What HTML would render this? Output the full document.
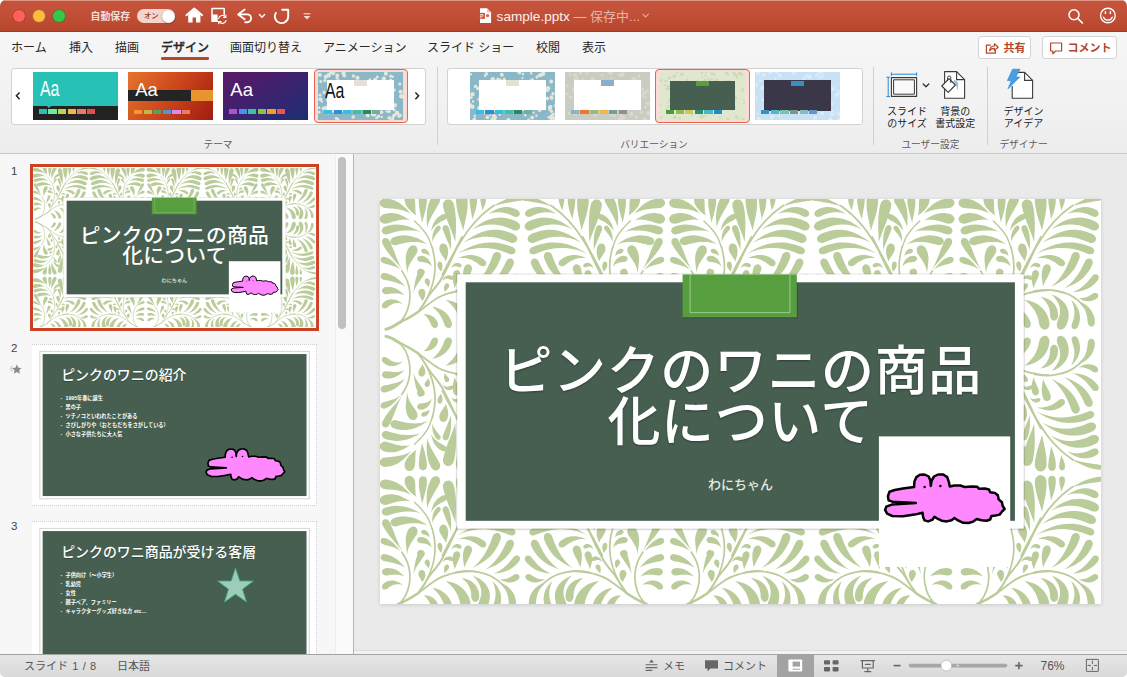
<!DOCTYPE html>
<html lang="ja"><head><meta charset="utf-8"><title>sample.pptx</title>
<style>
*{box-sizing:border-box;margin:0;padding:0}
html,body{width:1127px;height:677px;overflow:hidden;background:#fff}
body{font-family:"Liberation Sans","Noto Sans CJK JP",sans-serif;color:#222;position:relative}
.win{position:absolute;left:0;top:0;width:1127px;height:677px;border-radius:6px 6px 5px 5px;overflow:hidden;background:#ebebeb}
.abs{position:absolute}
.tb{position:absolute;left:0;top:0;width:1127px;height:32px;background:linear-gradient(#c5533a 0,#c4523a 32%,#b8472e 92%,#b5452c 100%);box-shadow:inset 0 1px 0 #dd9683,inset 0 -1px 0 #a5371e}
.tl{position:absolute;top:9.5px;width:12.5px;height:12.5px;border-radius:50%}
.tbt{position:absolute;color:#f9e6e0;white-space:nowrap}
.tabs{position:absolute;left:0;top:32px;width:1127px;height:32px;background:linear-gradient(#f6f6f6,#f4f4f4)}
.tab{position:absolute;top:0;height:32px;line-height:33px;font-size:12px;color:#262626;white-space:nowrap;letter-spacing:0}
.rib{position:absolute;left:0;top:64px;width:1127px;height:90px;background:linear-gradient(#f4f4f4 0,#f1f1f1 55%,#ececec 100%);border-bottom:1px solid #c9c9c9}
.gal{position:absolute;top:3.5px;height:57px;background:#fff;border:1px solid #d2d2d2;border-radius:3px}
.th{position:absolute;top:8px;width:85px;height:48px;overflow:hidden}
.sq{position:absolute;height:5px;width:8.2px}
.sel{position:absolute;top:5px;height:54px;border:1px solid #e8634c;background:#fbdcd5;border-radius:4px}
.glab{position:absolute;top:73px;font-size:9.7px;color:#5c5c5c;white-space:nowrap;transform:translateX(-50%)}
.vsep{position:absolute;top:3px;width:1px;height:78px;background:#d0d0d0}
.blab{position:absolute;font-size:10px;line-height:11.5px;color:#222;text-align:center;white-space:nowrap;transform:translateX(-50%)}
.btn{position:absolute;top:36.5px;height:23px;background:#fff;border:1px solid #d4d4d4;border-radius:3px;color:#b5452b;font-size:12px;font-weight:bold;white-space:nowrap}
.left{position:absolute;left:0;top:154px;width:353px;height:500px;background:#f7f7f7;overflow:hidden}
.divv{position:absolute;left:353px;top:154px;width:1px;height:500px;background:#b4b4b4}
.main{position:absolute;left:354px;top:154px;width:773px;height:500px;background:#eaeaea;overflow:hidden}
.sb{position:absolute;left:0;top:654px;width:1127px;height:23px;background:linear-gradient(#e6e6e6,#d9d9d9);box-shadow:inset 0 1px 0 #a2a2a2;font-size:11px;color:#555}
.sbt{position:absolute;top:1px;line-height:22px;white-space:nowrap;color:#555;font-size:11px}
.num{position:absolute;left:11px;font-size:11.5px;color:#444}
.slide{position:absolute;width:720px;height:405px;transform-origin:0 0;overflow:hidden;background:#fff}
.jp{font-family:"Liberation Sans","Noto Sans CJK JP",sans-serif}
</style></head><body>
<svg width="0" height="0" style="position:absolute"><defs>
<g id="ft" fill="#bacc99">
<path d="M33.4 22L31.4 19.8L29.4 17.5L27.2 15.4L25 13.3L22.5 11.5L19.9 9.9L17.1 8.5L14.2 7.4L11.1 6.7L8 6.3L5.8 6.5L4.2 7.2L3 8.2L2.3 9.4L2 11L2.4 12.6L3.1 13.7L4.2 14.7L5.6 15.5L7.3 15.9L9.9 16.1L12.4 16.3L14.9 16.5L17.5 16.8L20.1 17.2L22.8 17.7L25.5 18.4L28.2 19.3L30.9 20.5ZM32.7 28.2L30.3 26.8L27.9 25.4L25.5 24.1L23 23L20.4 22L17.6 21.4L14.8 21L12 21L9.1 21.3L6.3 22L4.3 23L3 24.3L2.2 25.7L2 27.1L2.4 28.7L3.4 30.1L4.5 30.9L5.9 31.5L7.4 31.7L9.2 31.4L11.3 30.8L13.4 30.1L15.5 29.5L17.7 28.9L20 28.3L22.3 27.9L24.8 27.6L27.4 27.5L30 27.6ZM42.8 40L39.5 38.1L36.2 36.5L32.9 35.1L29.4 33.9L25.9 33.1L22.2 32.6L18.6 32.4L14.8 32.7L11.1 33.4L7.4 34.4L5.8 35.2L4.8 36.3L4.2 37.5L4 38.6L4.3 40L5.1 41.1L6 41.8L7.1 42.2L8.5 42.3L10 42.1L13.1 41.1L16.2 40.2L19.3 39.5L22.4 38.9L25.6 38.5L28.9 38.3L32.2 38.3L35.7 38.5L39.2 39ZM50.1 52.3L47.1 50.3L44.1 48.4L41 46.7L37.7 45.3L34.4 44.3L30.9 43.6L27.4 43.2L23.8 43.3L20.1 43.8L16.5 44.8L14.8 45.6L13.6 46.8L13 48L12.7 49.2L13 50.6L13.9 51.8L14.8 52.5L16.1 53L17.5 53.2L19.1 52.9L22 52L24.9 51.3L27.8 50.7L30.8 50.2L33.8 50L36.9 49.9L40 50L43.3 50.4L46.7 51.2ZM38.7 23.7L38.2 22L37.9 20.2L37.7 18.4L37.7 16.6L37.6 14.9L37.6 13.2L37.6 11.6L37.5 10L37.3 8.5L37.1 7L36.4 5.4L35.4 4.1L34.2 3.1L33 2.6L31.2 2.4L29.5 2.9L28.4 3.7L27.4 5.1L26.9 6.9L27 9.2L27.5 11L28.2 12.8L29.1 14.5L30.2 16L31.5 17.5L32.9 18.9L34.3 20.2L35.8 21.4L37.3 22.5ZM44.4 30.8L45 28.4L45.6 26.1L46.3 23.8L46.9 21.5L47.5 19.2L48.1 16.8L48.5 14.5L48.9 12.2L49.1 9.8L49.2 7.5L49 5.9L48.5 4.7L47.6 3.8L46.7 3.2L45.3 2.9L44 3.2L43 3.7L42.1 4.5L41.5 5.7L41.2 7.2L41.1 9.6L41.2 11.9L41.4 14.3L41.7 16.6L42.1 19L42.6 21.3L43 23.7L43.5 26.1L44 28.4ZM49.5 35.3L50.3 32.4L51.3 29.7L52.5 27.1L53.8 24.5L55.1 22L56.5 19.7L57.8 17.3L59.2 15L60.5 12.7L61.8 10.3L62.4 8.7L62.5 7.1L62.1 5.7L61.6 4.6L60.4 3.5L58.9 2.9L57.6 2.9L56.1 3.3L54.8 4.2L53.5 5.8L52.2 8.5L51 11.4L50.2 14.3L49.6 17.3L49.2 20.3L49 23.3L48.9 26.3L49.1 29.3L49.3 32.3ZM53.4 39.1L54.5 37.3L55.7 35.7L57 34.3L58.3 33L59.7 31.9L61.1 30.9L62.6 30L64 29.2L65.6 28.4L67.1 27.6L68 27L68.7 26.3L69.1 25.5L69.2 24.7L69.1 23.7L68.6 22.8L68 22.3L67.1 22L65.9 22L64.7 22.3L62.7 23.4L61 24.6L59.4 26L58 27.6L56.8 29.3L55.8 31.1L55 33L54.4 35L53.8 37ZM54.5 49.8L55.1 48.3L55.7 46.9L56.4 45.6L57.2 44.3L58 43.1L58.9 42L59.7 40.9L60.6 39.8L61.5 38.7L62.4 37.6L62.8 36.9L63 36.1L63 35.4L62.8 34.8L62.4 34.1L61.7 33.7L61.1 33.5L60.3 33.6L59.5 33.9L58.8 34.6L57.7 35.9L56.9 37.3L56.1 38.8L55.6 40.3L55.1 41.8L54.8 43.4L54.6 45L54.5 46.6L54.5 48.2ZM52 64.1L51.8 63.2L51.6 62.3L51.4 61.4L51.1 60.5L50.7 59.7L50.1 58.9L49.5 58.2L48.8 57.6L48 57.1L47 56.7L45.9 56.6L44.9 56.8L44.2 57.2L43.8 57.7L43.5 58.5L43.7 59.3L44 59.9L44.4 60.4L45 60.9L45.6 61.2L46.2 61.4L46.8 61.5L47.3 61.6L47.9 61.8L48.6 62L49.2 62.2L49.9 62.5L50.7 62.9L51.3 63.5ZM54.2 74.8L53.7 73.2L53.2 71.7L52.6 70.2L51.8 68.8L50.9 67.5L49.8 66.3L48.4 65.3L47 64.5L45.4 63.9L43.6 63.6L42 63.8L40.8 64.3L40 65L39.5 65.8L39.4 66.9L39.8 67.9L40.3 68.6L41.1 69.2L42 69.7L43.1 69.9L44.2 70L45.3 70.1L46.3 70.2L47.4 70.4L48.5 70.7L49.7 71.1L50.9 71.7L52.1 72.5L53.2 73.5ZM40.5 84.9L40.9 84.3L41.4 83.9L41.9 83.5L42.5 83.1L43 82.8L43.4 82.4L43.8 82.1L44.2 81.8L44.5 81.5L44.8 81.2L45.1 80.4L45.2 79.6L45.2 78.8L45 78L44.4 77.2L43.6 76.7L42.9 76.5L41.9 76.6L41 77.1L40.1 78.1L39.7 78.7L39.5 79.4L39.4 80L39.4 80.8L39.4 81.5L39.6 82.2L39.8 82.9L40 83.6L40.3 84.2ZM25.1 78.3L23.4 75.5L21.8 72.6L20.5 69.5L19.2 66.4L17.9 63.3L16.8 60.2L15.6 57.2L14.3 54.1L13 51.1L11.6 48.2L10.7 47L9.7 46.3L8.6 45.9L7.6 45.8L6.3 46.1L5.2 46.9L4.7 47.8L4.3 48.9L4.3 50.2L4.7 51.6L6.4 54.6L8.1 57.5L10.1 60.2L12.1 62.9L14.3 65.5L16.5 68.1L18.8 70.6L21 73.1L23.1 75.7ZM29.9 83.7L29.7 81L29.9 78.4L30.5 75.8L31.4 73.4L32.6 71.1L33.9 69L35.2 66.9L36.6 65L37.9 63L39.1 61.1L39.7 59.4L39.8 57.9L39.6 56.4L39.1 55.2L37.9 54L36.4 53.3L35.1 53.2L33.6 53.6L32 54.6L30.7 56.3L29.4 58.9L28.6 61.7L28.1 64.5L28 67.4L28.2 70.2L28.5 73L28.8 75.7L29.2 78.4L29.6 81ZM68 69.4L68.4 68.1L68.8 66.7L69.3 65.4L69.6 64L69.9 62.6L70.1 61.1L70.1 59.7L70.1 58.3L69.8 57L69.4 55.6L68.6 54.1L67.5 53.1L66.3 52.6L65.2 52.5L63.9 52.9L62.7 53.7L62.1 54.6L61.7 55.7L61.6 57L61.8 58.4L62.3 59.4L62.8 60.5L63.3 61.5L64 62.5L64.7 63.6L65.4 64.6L66.1 65.8L66.9 66.9L67.5 68.1ZM63.2 79.5L63.3 78.8L63.5 78.1L63.7 77.4L63.9 76.8L64.1 76.1L64.2 75.4L64.3 74.8L64.4 74.1L64.3 73.5L64.3 72.9L64 72L63.5 71.4L63 71L62.4 70.8L61.6 70.8L60.9 71.1L60.4 71.5L60 72.1L59.8 72.8L59.8 73.7L60 74.3L60.2 74.9L60.5 75.5L60.8 76.1L61.2 76.6L61.6 77.2L62 77.8L62.4 78.3L62.8 78.9ZM114.2 14.7L117 13.7L119.9 12.8L122.8 12.1L125.7 11.4L128.6 10.8L131.5 10.3L134.4 9.8L137.2 9.4L140.1 9L143 8.6L144 8.3L144.7 7.9L145.2 7.3L145.5 6.6L145.6 5.7L145.3 4.9L144.9 4.3L144.3 3.8L143.4 3.5L142.4 3.5L139.3 4L136.3 4.6L133.3 5.4L130.4 6.4L127.6 7.5L124.8 8.8L122.1 10.1L119.4 11.6L116.8 13.1ZM110.6 22L113.5 21L116.4 20.4L119.2 20.1L121.8 20.1L124.4 20.3L126.8 20.8L129.1 21.4L131.4 22.2L133.7 23.2L136 24.3L137.3 24.7L138.6 24.8L139.8 24.7L140.7 24.2L141.6 23.4L142.1 22.1L142.1 21.1L141.7 19.9L140.8 18.7L139.4 17.7L136.4 16.4L133.3 15.5L130.2 15L127.2 15L124.2 15.4L121.3 16.1L118.5 17.2L115.8 18.6L113.1 20.2ZM94.3 37.7L98.8 35.5L103.2 33.9L107.5 32.9L111.7 32.4L115.7 32.4L119.6 32.8L123.4 33.5L127.1 34.6L130.9 35.9L134.8 37.7L136.6 38.3L138.2 38.3L139.7 38.1L140.9 37.5L142 36.4L142.5 34.8L142.4 33.5L141.8 32.1L140.7 30.6L138.8 29.4L134.1 27.4L129.3 26.1L124.5 25.5L119.7 25.6L115.1 26.3L110.6 27.6L106.3 29.4L102.2 31.8L98.2 34.6ZM85.9 50.6L90.9 48.2L95.8 46.4L100.7 45.3L105.4 44.7L109.9 44.6L114.4 44.9L118.8 45.7L123.1 46.8L127.5 48.3L132 50.2L133.8 50.8L135.4 50.8L136.9 50.5L138 49.9L139.1 48.7L139.5 47.2L139.4 45.9L138.8 44.4L137.6 43.1L135.8 41.9L130.5 39.8L125.2 38.4L119.8 37.7L114.5 37.7L109.4 38.4L104.3 39.8L99.5 41.8L94.8 44.3L90.3 47.2ZM79.7 61.8L85.2 59.5L90.7 57.7L96 56.6L101.3 55.9L106.5 55.8L111.6 56.2L116.7 57L121.7 58.2L126.8 59.8L131.9 61.8L133.4 62.2L134.7 62.2L135.8 61.9L136.7 61.4L137.5 60.4L137.8 59.1L137.7 58.1L137.2 57L136.3 55.9L134.9 55L129.1 52.9L123.3 51.4L117.6 50.5L111.8 50.4L106.2 50.9L100.7 52L95.3 53.7L90 55.9L84.8 58.7ZM80.7 66L83.5 65.8L86.1 65.8L88.6 66.2L90.9 66.7L93 67.5L95 68.4L96.9 69.4L98.7 70.5L100.5 71.8L102.3 73.2L103.4 73.8L104.6 74.2L105.7 74.2L106.6 74L107.6 73.4L108.3 72.4L108.5 71.4L108.4 70.2L107.8 69L106.7 67.8L104.3 66.1L101.8 64.7L99.2 63.8L96.6 63.1L93.9 62.9L91.2 63L88.5 63.4L85.9 64L83.3 64.9ZM73.5 76.1L74.4 75.3L75.2 74.8L76.1 74.4L76.9 74.2L77.6 74.2L78.2 74.2L78.7 74.3L79.3 74.5L79.8 74.7L80.4 74.9L81.1 75.1L81.8 75.2L82.5 75.1L83.1 75L83.6 74.5L83.9 73.9L83.8 73.2L83.5 72.5L82.9 71.8L81.9 71.2L80.8 70.8L79.7 70.7L78.6 70.8L77.5 71.2L76.6 71.7L75.8 72.4L75.1 73.2L74.5 74.1L74 75.1ZM104.6 18.4L105.2 17.2L105.7 16.1L106.3 14.9L106.8 13.7L107.3 12.4L107.7 11.2L108.1 9.9L108.3 8.7L108.4 7.4L108.5 6.1L108.2 4.9L107.8 4L107.1 3.4L106.4 3.1L105.4 2.9L104.4 3.2L103.8 3.6L103.2 4.3L102.8 5.1L102.6 6.2L102.7 7.4L102.8 8.6L102.9 9.7L103.2 10.9L103.4 12.2L103.7 13.4L104 14.6L104.2 15.9L104.5 17.1ZM94.5 27.4L95.2 25.4L96 23.3L96.7 21.3L97.4 19.2L98 17.1L98.5 15L98.9 12.9L99.2 10.7L99.3 8.6L99.3 6.5L99 4.9L98.4 3.8L97.5 3L96.6 2.5L95.3 2.4L94 2.7L93.2 3.3L92.4 4.1L91.9 5.3L91.7 6.7L91.8 8.7L92 10.8L92.2 12.8L92.5 14.8L92.9 16.9L93.2 19L93.6 21L94 23.1L94.3 25.3ZM85.5 38.6L86.1 35.5L86.8 32.5L87.5 29.4L88.1 26.3L88.8 23.2L89.3 20.2L89.7 17.1L89.9 14.1L90 11L90 8L89.5 5.7L88.5 4L87.2 2.8L85.9 2.1L83.9 1.8L81.9 2.3L80.6 3.1L79.4 4.5L78.6 6.2L78.3 8.5L78.5 11.5L78.9 14.6L79.5 17.6L80.1 20.6L80.9 23.6L81.8 26.6L82.8 29.6L83.8 32.6L84.7 35.6ZM77.7 49.8L77.8 46.1L78 42.3L78.2 38.4L78.3 34.6L78.3 30.8L78.2 27L77.9 23.2L77.5 19.4L76.9 15.7L76.1 12L75.2 10L74 8.6L72.6 7.7L71.2 7.3L69.3 7.4L67.5 8.2L66.5 9.3L65.6 10.7L65.2 12.5L65.4 14.6L66.3 18.1L67.3 21.7L68.5 25.2L69.7 28.7L71 32.2L72.4 35.7L73.8 39.2L75.2 42.7L76.5 46.3ZM73.2 58.1L73.3 55.9L73.4 53.6L73.5 51.3L73.4 49L73.3 46.7L73.1 44.4L72.8 42.1L72.3 39.8L71.7 37.6L71 35.4L70.4 34.3L69.6 33.6L68.7 33.1L67.9 33L66.8 33.2L65.9 33.8L65.4 34.5L65 35.4L64.9 36.4L65.1 37.6L65.9 39.6L66.7 41.6L67.5 43.6L68.4 45.6L69.2 47.6L70.1 49.7L71 51.7L71.8 53.8L72.6 56ZM68.1 69.4L68.6 68L69.1 66.5L69.6 65L70 63.5L70.3 62L70.4 60.4L70.5 58.9L70.3 57.4L70 55.8L69.6 54.4L68.6 52.9L67.5 51.9L66.3 51.4L65.2 51.3L63.9 51.7L62.8 52.6L62.2 53.5L61.8 54.7L61.7 55.9L62 57.3L62.5 58.5L63.1 59.6L63.7 60.7L64.3 61.8L65 62.9L65.7 64.1L66.4 65.3L67.1 66.6L67.7 68ZM63.7 79.5L63.8 78.7L64.1 77.9L64.3 77.1L64.5 76.3L64.7 75.4L64.8 74.6L64.8 73.8L64.7 72.9L64.6 72.1L64.4 71.4L63.9 70.5L63.3 69.9L62.6 69.6L62 69.5L61.2 69.7L60.5 70.2L60.1 70.7L59.9 71.3L59.8 72.1L59.9 72.9L60.2 73.5L60.5 74.2L60.8 74.8L61.2 75.4L61.6 76L62.1 76.7L62.5 77.4L62.9 78L63.3 78.7ZM24.2 79.2L22.8 77.6L21.3 76L19.9 74.3L18.4 72.7L16.9 71L15.3 69.5L13.5 68L11.6 66.7L9.6 65.7L7.5 64.8L6.1 64.6L5 64.8L4 65.2L3.4 65.9L2.9 66.9L2.9 68L3.1 68.8L3.6 69.7L4.4 70.4L5.5 71L7.3 71.6L9.3 72.1L11.2 72.6L13.2 73.2L15.1 73.8L17.1 74.5L19.1 75.4L20.9 76.5L22.7 77.7ZM27.4 94.4L25.8 92.5L24.2 90.7L22.5 89L20.7 87.3L18.8 85.8L16.7 84.4L14.6 83.3L12.3 82.3L9.9 81.5L7.5 80.9L6 80.8L4.8 81.2L3.9 81.8L3.3 82.6L2.9 83.7L3 84.9L3.4 85.8L4.1 86.6L5 87.3L6.2 87.7L8.3 88.1L10.4 88.5L12.5 89L14.6 89.5L16.7 90L18.8 90.6L21 91.3L23.2 92.2L25.3 93.2ZM26.7 103.1L25.2 101.6L23.7 100.2L22 98.9L20.3 97.7L18.5 96.7L16.5 95.8L14.4 95.2L12.3 94.9L10.1 94.8L7.9 95L6.3 95.5L5.2 96.3L4.5 97.2L4.2 98.2L4.3 99.4L4.9 100.5L5.6 101.2L6.5 101.8L7.6 102.1L8.9 102.1L10.6 101.9L12.2 101.7L13.9 101.5L15.6 101.4L17.3 101.3L19.1 101.4L20.9 101.5L22.8 101.9L24.8 102.4ZM25.1 111.8L23.4 110.5L21.6 109.3L19.7 108.4L17.8 107.7L15.8 107.3L13.8 107.2L11.7 107.4L9.7 108L7.7 109L5.9 110.3L4.8 111.5L4.2 112.8L4.1 113.9L4.3 114.8L4.9 115.7L5.9 116.2L6.8 116.3L7.8 116.1L8.9 115.8L9.9 115.1L11.1 114.2L12.3 113.3L13.5 112.6L14.7 112L16.1 111.5L17.6 111.1L19.2 110.9L21.1 110.9L23.1 111.2ZM35.2 102L35.9 99.7L36.8 97.6L37.8 95.4L39 93.4L40.3 91.4L41.6 89.5L42.9 87.6L44.1 85.8L45.4 83.9L46.6 82L47 80.9L47.1 79.9L46.9 79L46.5 78.3L45.8 77.5L44.8 77.1L44 77.1L43.1 77.3L42.2 77.9L41.4 78.8L40.2 81L39.2 83.2L38.4 85.5L37.8 87.9L37.3 90.2L36.8 92.6L36.5 95L36.1 97.3L35.7 99.7ZM44.7 109.2L45.1 108.3L45.6 107.5L46.1 106.6L46.6 105.6L47 104.7L47.3 103.7L47.5 102.8L47.6 101.8L47.6 100.8L47.5 99.9L47 98.5L46.2 97.5L45.2 96.9L44.3 96.7L43.1 96.8L42 97.4L41.4 98.1L40.9 99L40.6 100L40.7 101.3L40.9 102L41.2 102.8L41.5 103.5L41.9 104.2L42.4 105L42.9 105.8L43.4 106.6L43.9 107.4L44.3 108.3ZM50.8 95.2L51.1 94.5L51.3 93.8L51.6 93.1L51.9 92.4L52.1 91.7L52.2 91L52.3 90.3L52.2 89.6L52.1 88.9L52 88.3L51.4 87.3L50.7 86.7L49.9 86.3L49.2 86.3L48.4 86.5L47.7 87.1L47.3 87.6L47 88.4L46.9 89.1L47.1 90L47.3 90.5L47.6 91L47.9 91.5L48.3 92L48.7 92.5L49.2 93L49.6 93.5L50.1 94L50.5 94.6ZM46.1 122.2L47.4 123.4L48.5 124.5L49.5 125.6L50.3 126.7L51 127.8L51.6 128.9L52.2 129.9L52.7 130.9L53.1 132L53.6 133.1L54.2 134.1L54.9 134.9L55.8 135.5L56.7 135.8L57.9 135.9L59 135.4L59.7 134.7L60.2 133.6L60.4 132.2L60 130.5L59.3 128.9L58.3 127.4L57.2 126.1L55.9 125L54.4 124L52.9 123.3L51.3 122.7L49.6 122.3L47.9 122.2ZM86.7 94.2L87.3 92.4L88.1 90.7L88.9 89L89.7 87.4L90.6 85.8L91.4 84.3L92.2 82.7L92.9 81.2L93.5 79.6L94.1 78L94.4 76.5L94.2 75.2L93.8 74.1L93.1 73.3L91.9 72.5L90.6 72.2L89.5 72.4L88.3 72.9L87.3 73.9L86.5 75.3L86 77.2L85.6 79L85.3 80.9L85.2 82.8L85.3 84.7L85.4 86.6L85.7 88.5L86 90.4L86.3 92.3ZM94.5 94.6L98.3 92.8L101.9 90.9L105.4 88.7L108.8 86.3L111.9 83.6L114.7 80.6L117.3 77.3L119.5 73.8L121.4 70L123 66L123.3 64.1L123.1 62.6L122.5 61.3L121.7 60.5L120.3 59.8L118.8 59.8L117.7 60.1L116.6 60.8L115.6 61.8L114.9 63.3L113.7 66.8L112.3 70.2L110.8 73.5L109.2 76.8L107.4 80L105.4 83.1L103.1 86.1L100.6 89.1L97.7 92ZM107.4 96.3L111 95L114.5 93.5L117.9 91.9L121.1 89.9L124.2 87.8L127.1 85.3L129.7 82.5L132 79.5L134.1 76.1L135.8 72.6L136.3 70.9L136.2 69.4L135.7 68.1L135 67.3L133.8 66.5L132.4 66.4L131.3 66.6L130.2 67.2L129.2 68.1L128.4 69.4L127 72.5L125.5 75.5L123.9 78.4L122.2 81.2L120.3 84L118.2 86.7L115.9 89.3L113.4 91.8L110.6 94.1ZM115.8 100.2L118.7 99.9L121.6 99.6L124.5 99L127.2 98.2L129.9 97.2L132.5 95.9L135 94.3L137.3 92.5L139.4 90.4L141.4 88.1L142.1 86.7L142.3 85.4L142.2 84.3L141.7 83.4L140.9 82.6L139.7 82.2L138.8 82.2L137.7 82.4L136.7 83L135.8 83.9L134.2 85.9L132.6 87.8L131 89.7L129.3 91.5L127.4 93.2L125.5 94.9L123.3 96.4L121 97.9L118.5 99.1ZM122 105.8L123.7 106.7L125.4 107.6L127.1 108.3L128.9 108.8L130.7 109.1L132.6 109.1L134.5 108.9L136.3 108.5L138.1 107.7L139.8 106.7L141 105.7L141.6 104.6L141.8 103.5L141.7 102.6L141.1 101.7L140.2 101.1L139.3 100.8L138.4 100.8L137.4 101L136.3 101.5L135.1 102.3L134 103L132.8 103.7L131.6 104.3L130.3 104.9L128.9 105.4L127.3 105.7L125.7 106L123.9 106ZM54.6 114.6L56.5 116.3L58.3 118L59.9 119.8L61.3 121.5L62.5 123.3L63.5 125.1L64.5 126.9L65.3 128.7L66.1 130.6L66.8 132.6L67.4 133.9L68.2 134.8L69.2 135.5L70.2 135.9L71.5 135.9L72.7 135.4L73.5 134.6L74.1 133.5L74.3 132L74 130.2L73 127.7L71.8 125.3L70.2 123.2L68.5 121.2L66.5 119.5L64.4 118L62.1 116.8L59.7 115.8L57.2 115ZM68.1 107.8L71 110.2L73.4 112.5L75.5 114.8L77.2 117.1L78.7 119.5L79.8 121.8L80.8 124.2L81.6 126.7L82.2 129.2L82.7 131.9L83.3 133.8L84.2 135.3L85.4 136.4L86.6 137.2L88.3 137.6L90.1 137.2L91.3 136.3L92.3 134.8L92.9 132.8L92.9 130.2L92.1 126.6L90.8 123.1L89 119.9L86.9 117.1L84.4 114.6L81.6 112.5L78.6 110.8L75.3 109.4L71.8 108.4ZM84.1 104.8L86.3 106.7L88.2 108.5L89.7 110.3L90.9 112.2L91.8 114L92.5 115.7L92.9 117.5L93.3 119.3L93.5 121.2L93.5 123.3L93.8 124.8L94.3 126.2L95 127.3L95.8 128L97.1 128.6L98.5 128.5L99.5 127.9L100.6 126.9L101.3 125.3L101.6 123.3L101.4 120.3L100.8 117.5L99.7 114.9L98.3 112.5L96.6 110.5L94.5 108.7L92.2 107.3L89.7 106.2L87 105.3ZM95.1 102.2L97.9 105.3L100.1 108.3L101.8 111.2L102.8 113.9L103.4 116.5L103.6 118.9L103.5 121.2L103 123.6L102.2 126.2L101.1 128.9L100.5 130.9L100.3 132.7L100.5 134.4L100.9 135.7L102 137L103.7 137.6L105.1 137.4L106.8 136.6L108.5 135.2L109.9 132.9L111.4 129L112.1 125.1L112.2 121.2L111.5 117.5L110.1 114.1L108.1 111L105.5 108.3L102.5 105.9L99 103.9ZM114.7 107.8L115.9 110.6L116.8 113.2L117.4 115.8L117.8 118.2L117.9 120.5L117.8 122.8L117.5 125L117 127.2L116.3 129.4L115.4 131.7L115.1 132.9L115.1 134.1L115.3 135.2L115.8 136L116.6 136.8L117.8 137.1L118.7 137L119.8 136.5L120.8 135.6L121.6 134.3L122.7 131.3L123.3 128.4L123.5 125.5L123.3 122.6L122.7 119.8L121.8 117.1L120.5 114.6L118.9 112.2L117 109.9ZM121.4 108.7L123.5 110.8L125.3 112.9L126.8 115L128 117.1L129 119.2L129.7 121.3L130.3 123.4L130.7 125.6L131 127.9L131.2 130.2L131.5 131.6L132 132.7L132.7 133.6L133.5 134.2L134.7 134.6L135.9 134.4L136.8 133.9L137.6 132.9L138.2 131.6L138.4 129.9L138.1 126.9L137.4 124L136.3 121.3L135 118.8L133.3 116.5L131.3 114.5L129.2 112.7L126.8 111.2L124.2 109.9ZM77.1 96.3L77.5 94.8L78 93.4L78.6 91.9L79.2 90.6L79.8 89.2L80.4 87.9L81 86.6L81.5 85.3L81.9 84.1L82.4 82.8L82.5 81.5L82.3 80.4L81.9 79.4L81.3 78.7L80.3 78.1L79.1 77.9L78.1 78.1L77.2 78.6L76.3 79.5L75.7 80.8L75.3 82.3L75.1 83.9L75 85.5L75.1 87.1L75.2 88.6L75.5 90.2L75.9 91.8L76.3 93.3L76.7 94.8ZM64.6 89L65.5 88.1L66.4 87.4L67.4 87L68.3 86.7L69.1 86.6L69.8 86.6L70.4 86.7L71.1 86.9L71.7 87.1L72.5 87.4L73.2 87.7L74 87.7L74.6 87.7L75.2 87.5L75.8 87.1L76 86.4L76 85.8L75.7 85.1L75 84.3L74.1 83.7L72.8 83.3L71.6 83.1L70.3 83.2L69.1 83.6L68.1 84.1L67.2 84.8L66.4 85.7L65.7 86.7L65.1 87.8ZM67 100.2L67.4 99.6L67.8 99L68.3 98.4L68.8 97.9L69.3 97.4L69.7 96.9L70.2 96.4L70.6 95.9L70.9 95.4L71.2 94.9L71.5 94.2L71.6 93.4L71.4 92.7L71.2 92.2L70.6 91.6L69.9 91.2L69.2 91.2L68.5 91.4L67.8 91.8L67.1 92.6L66.8 93.3L66.5 94.1L66.4 94.8L66.3 95.6L66.3 96.4L66.4 97.2L66.5 98L66.7 98.7L66.9 99.5Z"/>
<path d="M8.2 137.1C9.2 136.8 11.8 136.1 14.1 135C16.4 133.9 20.7 131.1 22 130.3" fill="none" stroke="#bacc99" stroke-width="3" stroke-linecap="round"/>
<path d="M20.9 131C22.6 130.1 28 127.4 31.2 125.6C34.4 123.8 38.5 121.1 40 120.2" fill="none" stroke="#bacc99" stroke-width="2.5" stroke-linecap="round"/>
<path d="M40 120.2C41 118.8 44.3 114.6 46.1 111.8C48 109 48.5 107.2 51.2 103.4C53.9 99.5 59 94 62.4 88.8C65.8 83.5 68.6 77.5 71.4 71.9C74.2 66.3 77.1 59.6 79.2 55.1C81.4 50.6 83.4 46.7 84.3 45" fill="none" stroke="#bacc99" stroke-width="2" stroke-linecap="round"/>
<path d="M64.8 82.3C65.9 80.1 68.9 74 71.5 69.1C74.1 64.3 77.1 58.9 80.5 53.4C83.9 48 87.8 41.6 91.7 36.6C95.6 31.5 99.9 27 104.1 23.1C108.2 19.2 114.3 14.9 116.4 13.3" fill="none" stroke="#bacc99" stroke-width="1.8" stroke-linecap="round"/>
<path d="M49.5 106.2C50 104.9 51.5 101.8 52.5 98.9C53.6 96 54.9 92.3 55.7 88.8C56.5 85.2 57.2 81.3 57.3 77.5C57.5 73.8 57.3 70.1 56.8 66.3C56.3 62.6 54.9 57 54.5 55.1" fill="none" stroke="#bacc99" stroke-width="1.7" stroke-linecap="round"/>
<path d="M54.5 55.7C53.8 53.8 51.9 47.8 50.1 44.5C48.2 41.1 45.5 38.1 43.3 35.5C41.1 32.9 37.9 30.1 36.8 29" fill="none" stroke="#bacc99" stroke-width="1.4" stroke-linecap="round"/>
<path d="M22 130.3C23 129 26.2 125.6 27.8 122.4C29.4 119.3 30.8 115 31.5 111.2C32.2 107.5 32.4 103.7 32.1 100C31.8 96.2 30.9 92.3 29.6 88.8C28.3 85.3 25.1 80.5 24.2 78.9" fill="none" stroke="#bacc99" stroke-width="1.7" stroke-linecap="round"/>
<path d="M40 120.4C41.5 119.3 45.6 115.9 48.9 113.5C52.3 111 56.4 107.7 60.2 105.6C63.9 103.5 67.6 102.2 71.4 101.1C75.1 100 79.2 99.4 82.6 98.9C86 98.4 90.3 98.2 91.8 98.1" fill="none" stroke="#bacc99" stroke-width="1.8" stroke-linecap="round"/>
<path d="M78.2 98.9C80.1 98.7 85.7 97.7 89.5 97.7C93.2 97.7 96.9 98.1 100.7 98.9C104.4 99.6 108.5 100.7 111.9 102.2C115.3 103.7 118.3 105.8 120.9 107.8C123.5 109.9 126.5 113.5 127.6 114.6" fill="none" stroke="#bacc99" stroke-width="1.8" stroke-linecap="round"/>
</g>
<g id="croc">
<path d="M8.4 30.7L10 26.4L15.2 24.6L23.4 23.2L34.6 21.7L34.9 16.4L36.9 11.7L40.4 9.4L45.1 9.1L49.2 11.1L50.9 15.2L51.3 20.5L52.1 15.2L54.5 11.1L58.6 9.1L63.8 9.1L67.7 11.7L69.3 16.4L70.3 21.1L75 20.1L80.8 20.1L85.5 21.7L92.5 21.1L97.8 21.4L99.6 23.4L105.4 23.2L109.5 24L110.7 26.9L115.4 27.5L118.3 29.9L119.2 34L122.4 36.9L123.2 40.4L125.1 43.6L122.4 46.3L120.1 49.2L116 50.1L111.9 50.6L110.7 54.1L107.2 55.3L101.9 54.8L97.2 53.6L93.7 56.2L89 57.6L83.7 57.4L78.5 55L75 52.5L72 54.8L67.3 56L62.1 55.3L58 53.3L55 51.3L52.7 54.5L48.6 56L45.1 55L43.6 51.5L43.1 47.4L35.1 49.2L23.4 50.9L12.9 50.6L7.6 48.3L5.6 44.5L6.8 41.2L12.3 39.2L36.3 37.7L12.9 36.3L9.1 34.9Z" fill="#ff88ff" stroke="#000" stroke-width="2.5" stroke-linejoin="round"/>
<circle cx="45.1" cy="21.7" r="1.25"/><circle cx="60.9" cy="20.5" r="1.25"/>
</g>
</defs></svg>
<div class="win">
<div class="tb">
<div class="tl" style="left:12.8px;background:#fc615d;box-shadow:0 0 0 .6px #b3331f"></div>
<div class="tl" style="left:32.7px;background:#fdbc40;box-shadow:0 0 0 .6px #b7702a"></div>
<div class="tl" style="left:52.7px;background:#34c84a;box-shadow:0 0 0 .6px #3a7a2c"></div>
<div class="tbt" style="left:90.5px;top:8.5px;font-size:9.9px;line-height:15px;font-weight:700;color:#f6ddd6">自動保存</div>
<div class="abs" style="left:136.6px;top:9px;width:38.4px;height:14.4px;border-radius:7.2px;background:#f5d4cb"></div>
<div class="tbt" style="left:144px;top:9px;font-size:7.3px;line-height:14.4px;font-weight:500;color:#8e3a27">オン</div>
<div class="abs" style="left:161.5px;top:9.5px;width:13px;height:13px;border-radius:50%;background:#fdfdfd;box-shadow:0 .5px 1.5px rgba(0,0,0,.5)"></div>
<svg class="abs" style="left:0;top:0" width="1127" height="32" viewBox="0 0 1127 32" fill="none" stroke="#fff" stroke-linecap="round" stroke-linejoin="round">
<path d="M186.4 15.2L194.3 8.4L202.2 15.2" stroke-width="1.9"/>
<path d="M188.2 14.6L194.3 9.6L200.4 14.6V22.6H196V17.6H192.6V22.6H188.2Z" fill="#fff" stroke="none"/>
<path d="M217.5 21.3H212V8.4H224.2V14.5" stroke-width="1.5"/>
<path d="M212 14.5H217.6V21.3H212Z" fill="#fff" stroke="none"/>
<path d="M218.6 18.3A3.9 3.9 0 0 1 225.6 17.2M226 20.6A3.9 3.9 0 0 1 219 21.7" stroke-width="1.2"/>
<path d="M225.9 15.1V17.4H223.6M218.7 23.8V21.5H221" stroke-width="1.1"/>
<path d="M244.6 9.5L238.2 14.4L244.6 19.3M238.6 14.4H247.2A3.9 3.9 0 0 1 247.2 22.2H245.2" stroke-width="1.9"/>
<path d="M259.4 14.5L262 17.2L264.6 14.5" stroke-width="1.3"/>
<path d="M275.8 12.9A6.7 6.7 0 1 0 288.2 16.4V9.7H282.2" stroke-width="1.9"/>
<path d="M303.6 13.8H310.4" stroke-width="1.1" stroke-linecap="butt" stroke="#f6ddd6"/>
<path d="M303.5 15.9H310.5L307 19.6Z" fill="#f6ddd6" stroke="none"/>
<path d="M480 8.2H487L491.1 12.4V23.1H480Z" fill="#fff" stroke="none"/>
<path d="M487 8.2V12.4H491.1Z" fill="#e3c9c2" stroke="none"/>
<rect x="478.4" y="12.9" width="6.5" height="5.9" fill="#d5492d" stroke="none"/>
<text x="480" y="17.9" font-family="Liberation Sans,sans-serif" font-size="5.4" font-weight="700" fill="#fbe5df" stroke="none">P</text>
<circle cx="487.6" cy="15.6" r="1.7" fill="#e0674f" stroke="none"/>
<path d="M642.8 14.2L645.6 17L648.4 14.2" stroke-width="1.1" stroke="#e3a597"/>
<circle cx="1074" cy="14.7" r="5" stroke-width="1.5"/><path d="M1077.7 18.4L1082.4 23" stroke-width="1.7"/>
<circle cx="1107.9" cy="15.5" r="7.3" stroke-width="1.4"/>
<path d="M1103.6 17.2A4.6 4.6 0 0 0 1112.2 17.2" stroke-width="1.3"/>
<path d="M1105.4 11.8V13.6M1110.4 11.8V13.6" stroke-width="1.5"/>
</svg>
<div class="tbt" style="left:496.6px;top:8.2px;font-size:13.6px;line-height:18px;color:#fcf0ec">sample.pptx<span style="color:#e9b2a5;font-size:13px"> — 保存中...</span></div>
</div>
<div class="tabs">
<div class="tab" style="left:11px;">ホーム</div>
<div class="tab" style="left:69px;">挿入</div>
<div class="tab" style="left:115px;">描画</div>
<div class="tab" style="left:161px;font-weight:500;-webkit-text-stroke:.3px #262626;">デザイン</div>
<div class="tab" style="left:230px;">画面切り替え</div>
<div class="tab" style="left:323px;">アニメーション</div>
<div class="tab" style="left:427px;">スライド ショー</div>
<div class="tab" style="left:536px;">校閲</div>
<div class="tab" style="left:582px;">表示</div>
<div class="abs" style="left:161px;top:25.2px;width:47.5px;height:2.6px;border-radius:1.3px;background:#b7472a"></div>
<div class="btn" style="left:977.5px;top:4px;width:53px"></div>
<div class="btn" style="left:1041.5px;top:4px;width:75px"></div>
<svg class="abs" style="left:0;top:0" width="1127" height="32" viewBox="0 0 1127 32" fill="none" stroke="#b5452b" stroke-width="1.2" stroke-linejoin="round" stroke-linecap="round">
<path d="M990.4 13.2H986.4V21.2H995.4V18.6"/><path d="M989.6 18.6C990 15.4 992 14 994.4 14V11.8L998.2 15.2L994.4 18.4V16.4C992.4 16.4 990.8 17 989.6 18.6Z"/>
<path d="M1050.6 11H1061.6V19H1055.6L1052.8 21.8V19H1050.6Z"/>
</svg>
<div class="abs" style="left:1003.4px;top:4.5px;line-height:22px;font-size:11px;font-weight:700;color:#b5452b;white-space:nowrap">共有</div>
<div class="abs" style="left:1067.5px;top:4.5px;line-height:22px;font-size:11px;font-weight:700;color:#b5452b;white-space:nowrap">コメント</div>
</div>
<div class="rib">
<div class="gal" style="left:10.5px;width:415px"></div>
<svg class="abs" style="left:14px;top:26px" width="8" height="12" viewBox="0 0 8 12"><path d="M5.6 2.4L2.4 5.8L5.6 9.2" fill="none" stroke="#222" stroke-width="1.5"/></svg>
<svg class="abs" style="left:413px;top:26px" width="8" height="12" viewBox="0 0 8 12"><path d="M2.4 2.4L5.6 5.8L2.4 9.2" fill="none" stroke="#222" stroke-width="1.5"/></svg>
<div class="th" style="left:33.3px;width:84.6px;background:#27c1b5"><div class="abs" style="left:0;top:34px;width:85px;height:14px;background:#222"></div><div class="abs" style="left:14px;top:34px;width:0;height:0;border-left:2.6px solid transparent;border-right:2.6px solid transparent;border-top:2.6px solid #27c1b5"></div><div class="sq" style="left:5.6px;top:37.4px;width:8.2px;height:4.8px;background:#27c1b5"></div><div class="sq" style="left:15.2px;top:37.4px;width:8.2px;height:4.8px;background:#6fe8a0"></div><div class="sq" style="left:24.9px;top:37.4px;width:8.2px;height:4.8px;background:#b5d94a"></div><div class="sq" style="left:34.5px;top:37.4px;width:8.2px;height:4.8px;background:#f0b840"></div><div class="sq" style="left:44.1px;top:37.4px;width:8.2px;height:4.8px;background:#f07860"></div><div class="sq" style="left:53.8px;top:37.4px;width:8.2px;height:4.8px;background:#e84c50"></div><div class="abs" style="left:6.5px;top:4px;font-size:22px;line-height:26px;color:#fff;transform:scaleX(.72);transform-origin:0 0;white-space:nowrap">Aa</div></div>
<div class="th" style="left:128.2px;width:84.6px;background:linear-gradient(125deg,#e3762f 0,#cf4a1c 45%,#a01c10 100%)"><div class="abs" style="left:0;top:18.2px;width:63px;height:11.3px;background:#242424"></div><div class="abs" style="left:63px;top:18.2px;width:22px;height:11.3px;background:#ea9430"></div><div class="sq" style="left:5.8px;top:37.6px;width:8.2px;height:4.8px;background:#ef9a2c"></div><div class="sq" style="left:15.4px;top:37.6px;width:8.2px;height:4.8px;background:#bdb84c"></div><div class="sq" style="left:25.1px;top:37.6px;width:8.2px;height:4.8px;background:#4da368"></div><div class="sq" style="left:34.7px;top:37.6px;width:8.2px;height:4.8px;background:#4e99d0"></div><div class="sq" style="left:44.3px;top:37.6px;width:8.2px;height:4.8px;background:#d98cf0"></div><div class="sq" style="left:54.0px;top:37.6px;width:8.2px;height:4.8px;background:#f07c5c"></div><div class="abs" style="left:7px;top:7px;font-size:18.5px;line-height:22px;color:#fff;white-space:nowrap">Aa</div></div>
<div class="th" style="left:223.3px;width:84.3px;background:linear-gradient(150deg,#5b1a66 0,#43206e 40%,#1b2f72 100%)"><div class="sq" style="left:5.7px;top:37.4px;width:8.2px;height:4.8px;background:#b050d0"></div><div class="sq" style="left:15.3px;top:37.4px;width:8.2px;height:4.8px;background:#4e90e0"></div><div class="sq" style="left:25.0px;top:37.4px;width:8.2px;height:4.8px;background:#40c0a0"></div><div class="sq" style="left:34.6px;top:37.4px;width:8.2px;height:4.8px;background:#90c040"></div><div class="sq" style="left:44.2px;top:37.4px;width:8.2px;height:4.8px;background:#f0a020"></div><div class="sq" style="left:53.9px;top:37.4px;width:8.2px;height:4.8px;background:#f05050"></div><div class="abs" style="left:7px;top:7px;font-size:18.5px;line-height:22px;color:#fff;white-space:nowrap">Aa</div></div>
<div class="sel" style="left:313.5px;width:94px"></div>
<div class="th" style="left:318px;width:85px;background:#8bb8c8"><svg class="abs" style="left:0;top:0" width="85" height="48" fill="#e6e6da"><circle cx="20.2" cy="26.1" r="1.6"/><circle cx="51.3" cy="30.0" r="1.2"/><circle cx="1.1" cy="40.2" r="1.4"/><circle cx="19.9" cy="47.8" r="1.7"/><circle cx="71.1" cy="22.9" r="1.9"/><circle cx="12.8" cy="30.5" r="2.1"/><circle cx="44.5" cy="35.6" r="1.9"/><circle cx="5.4" cy="36.4" r="1.8"/><circle cx="25.6" cy="1.5" r="2.1"/><circle cx="40.2" cy="34.5" r="2.1"/><circle cx="60.7" cy="44.2" r="1.6"/><circle cx="68.1" cy="21.3" r="2.2"/><circle cx="74.7" cy="4.7" r="1.3"/><circle cx="18.4" cy="46.3" r="1.6"/><circle cx="53.3" cy="14.4" r="1.7"/><circle cx="32.8" cy="16.8" r="1.8"/><circle cx="49.7" cy="43.4" r="1.9"/><circle cx="79.0" cy="41.1" r="2.3"/><circle cx="57.1" cy="7.8" r="2.1"/><circle cx="82.0" cy="43.4" r="1.8"/><circle cx="60.7" cy="10.1" r="2.1"/><circle cx="48.8" cy="13.7" r="1.2"/><circle cx="72.6" cy="47.5" r="1.2"/><circle cx="68.1" cy="19.7" r="1.3"/><circle cx="25.0" cy="36.9" r="2.1"/><circle cx="3.8" cy="29.5" r="1.2"/><circle cx="61.1" cy="15.9" r="2.1"/><circle cx="83.4" cy="24.3" r="2.3"/><circle cx="26.3" cy="3.7" r="1.8"/><circle cx="2.7" cy="9.5" r="1.6"/><circle cx="51.9" cy="7.5" r="1.2"/><circle cx="73.8" cy="15.1" r="2.2"/><circle cx="76.2" cy="18.1" r="1.7"/><circle cx="44.2" cy="30.9" r="1.8"/><circle cx="47.5" cy="29.8" r="2.2"/><circle cx="43.1" cy="20.7" r="2.0"/><circle cx="20.2" cy="14.5" r="2.3"/><circle cx="44.3" cy="26.3" r="1.2"/><circle cx="35.3" cy="27.8" r="1.2"/><circle cx="52.3" cy="30.3" r="1.2"/><circle cx="53.3" cy="22.4" r="1.9"/><circle cx="30.0" cy="33.9" r="2.0"/><circle cx="1.9" cy="2.9" r="1.9"/><circle cx="81.9" cy="12.1" r="1.7"/><circle cx="50.4" cy="15.4" r="1.6"/><circle cx="26.6" cy="17.7" r="1.8"/><circle cx="25.5" cy="18.1" r="2.0"/><circle cx="2.3" cy="27.3" r="2.0"/><circle cx="26.4" cy="10.7" r="2.1"/><circle cx="20.3" cy="9.0" r="1.6"/><circle cx="59.3" cy="4.9" r="1.5"/><circle cx="28.4" cy="40.0" r="1.6"/><circle cx="72.7" cy="8.1" r="1.5"/><circle cx="55.3" cy="42.5" r="1.7"/><circle cx="19.1" cy="5.8" r="1.7"/><circle cx="16.2" cy="38.7" r="2.1"/><circle cx="15.6" cy="13.4" r="2.1"/><circle cx="54.6" cy="38.7" r="1.5"/><circle cx="11.0" cy="14.0" r="2.0"/><circle cx="23.0" cy="16.6" r="1.6"/><circle cx="35.7" cy="19.7" r="2.2"/><circle cx="13.3" cy="0.2" r="2.2"/><circle cx="74.8" cy="47.4" r="1.6"/><circle cx="80.8" cy="44.5" r="1.4"/><circle cx="63.4" cy="40.2" r="1.9"/><circle cx="44.1" cy="13.9" r="1.5"/><circle cx="19.3" cy="3.3" r="1.8"/><circle cx="24.4" cy="38.9" r="1.2"/><circle cx="76.8" cy="33.3" r="2.2"/><circle cx="76.2" cy="43.2" r="1.8"/><circle cx="1.1" cy="35.8" r="1.3"/><circle cx="25.5" cy="31.8" r="1.7"/><circle cx="35.2" cy="45.1" r="1.8"/><circle cx="29.0" cy="12.1" r="2.1"/><circle cx="40.6" cy="37.6" r="1.5"/><circle cx="16.8" cy="25.7" r="2.1"/><circle cx="14.6" cy="38.0" r="2.2"/><circle cx="68.5" cy="39.5" r="1.1"/><circle cx="53.4" cy="41.4" r="1.2"/><circle cx="23.1" cy="12.9" r="1.7"/><circle cx="36.0" cy="22.7" r="2.0"/><circle cx="0.2" cy="2.6" r="1.3"/><circle cx="10.6" cy="3.3" r="2.3"/><circle cx="72.6" cy="4.1" r="1.7"/><circle cx="26.9" cy="15.1" r="1.5"/><circle cx="55.0" cy="28.2" r="1.6"/><circle cx="16.2" cy="15.8" r="1.3"/><circle cx="47.2" cy="34.4" r="1.6"/><circle cx="6.8" cy="8.6" r="1.6"/><circle cx="51.4" cy="37.6" r="1.6"/><circle cx="68.1" cy="29.9" r="1.6"/><circle cx="31.7" cy="23.8" r="1.9"/><circle cx="35.7" cy="33.3" r="1.7"/><circle cx="20.8" cy="25.7" r="1.9"/><circle cx="6.1" cy="20.4" r="1.6"/><circle cx="74.8" cy="45.0" r="1.6"/><circle cx="76.3" cy="38.0" r="1.4"/><circle cx="39.5" cy="5.9" r="2.1"/><circle cx="56.3" cy="42.6" r="2.0"/><circle cx="56.7" cy="35.2" r="1.8"/><circle cx="8.8" cy="28.2" r="1.1"/><circle cx="12.2" cy="37.2" r="1.2"/><circle cx="7.8" cy="4.8" r="2.1"/><circle cx="15.2" cy="1.1" r="2.1"/><circle cx="10.3" cy="40.5" r="1.9"/><circle cx="71.1" cy="45.7" r="1.8"/><circle cx="67.9" cy="1.7" r="2.0"/><circle cx="43.5" cy="34.3" r="1.3"/><circle cx="63.7" cy="44.9" r="1.2"/><circle cx="27.6" cy="27.1" r="2.1"/><circle cx="20.6" cy="8.6" r="1.4"/><circle cx="52.4" cy="36.2" r="1.6"/><circle cx="31.2" cy="19.0" r="1.5"/><circle cx="35.5" cy="4.0" r="1.7"/><circle cx="82.7" cy="19.8" r="2.0"/><circle cx="13.7" cy="33.2" r="2.0"/><circle cx="57.3" cy="24.8" r="1.7"/><circle cx="54.7" cy="43.1" r="1.3"/><circle cx="8.1" cy="35.9" r="2.2"/><circle cx="44.0" cy="21.3" r="2.0"/><circle cx="15.8" cy="12.8" r="1.4"/><circle cx="49.8" cy="15.1" r="1.4"/><circle cx="58.7" cy="45.8" r="1.5"/><circle cx="60.0" cy="19.8" r="2.1"/><circle cx="49.7" cy="12.8" r="1.4"/><circle cx="2.0" cy="23.0" r="1.6"/><circle cx="14.6" cy="17.3" r="1.5"/><circle cx="65.8" cy="6.9" r="2.3"/><circle cx="40.8" cy="28.8" r="1.7"/><circle cx="70.9" cy="39.4" r="1.8"/></svg><div class="abs" style="left:9px;top:8.4px;width:66.7px;height:29.6px;background:#fff"></div><div class="abs" style="left:36px;top:8px;width:13px;height:5.5px;background:#e5e0d5"></div><div class="sq" style="left:6.0px;top:38.0px;width:8.2px;height:4.2px;background:#30c0e8"></div><div class="sq" style="left:15.6px;top:38.0px;width:8.2px;height:4.2px;background:#2890d8"></div><div class="sq" style="left:25.3px;top:38.0px;width:8.2px;height:4.2px;background:#30c0e0"></div><div class="sq" style="left:34.9px;top:38.0px;width:8.2px;height:4.2px;background:#40c0a0"></div><div class="sq" style="left:44.5px;top:38.0px;width:8.2px;height:4.2px;background:#308858"></div><div class="sq" style="left:54.2px;top:38.0px;width:8.2px;height:4.2px;background:#70b0a0"></div><div class="abs" style="left:7px;top:5.5px;font-size:22px;line-height:26px;color:#111;transform:scaleX(.72);transform-origin:0 0;white-space:nowrap">Aa</div></div>
<div class="vsep" style="left:436.5px"></div>
<div class="glab" style="left:218px">テーマ</div>
<div class="gal" style="left:447px;width:415.5px"></div>
<div class="th" style="left:470px;width:85px;background:#8bb8c8"><svg class="abs" style="left:0;top:0" width="85" height="48" fill="#e6e6da"><circle cx="52.9" cy="35.6" r="2.0"/><circle cx="80.1" cy="35.5" r="2.2"/><circle cx="2.5" cy="22.3" r="2.2"/><circle cx="55.2" cy="43.2" r="1.3"/><circle cx="39.9" cy="11.8" r="1.8"/><circle cx="48.8" cy="0.6" r="1.4"/><circle cx="23.8" cy="44.0" r="2.0"/><circle cx="13.6" cy="38.3" r="1.3"/><circle cx="52.5" cy="6.1" r="1.1"/><circle cx="74.1" cy="10.1" r="1.4"/><circle cx="83.5" cy="41.9" r="1.5"/><circle cx="81.7" cy="25.9" r="1.9"/><circle cx="17.4" cy="45.2" r="1.9"/><circle cx="82.2" cy="42.9" r="1.5"/><circle cx="30.7" cy="8.0" r="1.3"/><circle cx="5.5" cy="14.5" r="1.8"/><circle cx="0.3" cy="32.5" r="1.5"/><circle cx="26.3" cy="39.3" r="1.7"/><circle cx="26.8" cy="23.1" r="1.9"/><circle cx="4.8" cy="46.8" r="1.2"/><circle cx="63.7" cy="40.6" r="1.2"/><circle cx="67.0" cy="17.6" r="1.8"/><circle cx="0.8" cy="2.2" r="1.3"/><circle cx="81.2" cy="9.4" r="2.0"/><circle cx="79.0" cy="45.2" r="1.5"/><circle cx="30.2" cy="25.2" r="2.0"/><circle cx="9.2" cy="35.9" r="2.0"/><circle cx="73.1" cy="1.8" r="2.2"/><circle cx="7.8" cy="16.4" r="1.8"/><circle cx="78.0" cy="16.3" r="2.2"/><circle cx="46.3" cy="15.0" r="1.5"/><circle cx="15.1" cy="3.8" r="1.3"/><circle cx="58.6" cy="47.8" r="1.3"/><circle cx="4.1" cy="47.4" r="1.7"/><circle cx="34.5" cy="11.4" r="1.8"/><circle cx="70.2" cy="21.9" r="1.6"/><circle cx="4.7" cy="44.0" r="1.2"/><circle cx="42.0" cy="40.2" r="1.3"/><circle cx="62.2" cy="45.6" r="1.9"/><circle cx="67.0" cy="5.1" r="1.6"/><circle cx="12.7" cy="40.5" r="1.5"/><circle cx="38.5" cy="48.0" r="2.1"/><circle cx="83.0" cy="21.8" r="1.7"/><circle cx="62.0" cy="23.0" r="1.5"/><circle cx="34.3" cy="7.0" r="1.6"/><circle cx="84.0" cy="46.1" r="1.9"/><circle cx="42.4" cy="16.2" r="1.2"/><circle cx="23.1" cy="37.5" r="2.1"/><circle cx="30.7" cy="37.7" r="2.0"/><circle cx="59.0" cy="31.9" r="2.0"/><circle cx="30.9" cy="33.8" r="1.5"/><circle cx="41.3" cy="36.9" r="1.9"/><circle cx="25.0" cy="45.4" r="1.9"/><circle cx="49.4" cy="0.6" r="1.8"/><circle cx="21.3" cy="32.2" r="1.7"/><circle cx="69.4" cy="31.1" r="2.0"/><circle cx="29.6" cy="30.9" r="2.0"/><circle cx="70.4" cy="16.8" r="2.1"/><circle cx="73.9" cy="33.0" r="2.3"/><circle cx="81.3" cy="24.9" r="1.7"/><circle cx="14.1" cy="40.2" r="2.2"/><circle cx="40.6" cy="33.2" r="2.0"/><circle cx="62.1" cy="8.2" r="2.0"/><circle cx="49.4" cy="31.9" r="1.6"/><circle cx="53.0" cy="37.2" r="1.9"/><circle cx="61.2" cy="1.3" r="1.3"/><circle cx="37.5" cy="31.2" r="1.4"/><circle cx="58.3" cy="30.3" r="1.2"/><circle cx="40.1" cy="10.9" r="1.2"/><circle cx="11.3" cy="15.2" r="1.3"/><circle cx="16.4" cy="1.7" r="1.7"/><circle cx="32.3" cy="29.4" r="1.8"/><circle cx="20.2" cy="43.4" r="1.1"/><circle cx="34.5" cy="13.4" r="1.6"/><circle cx="9.8" cy="39.9" r="1.6"/><circle cx="3.1" cy="29.5" r="1.2"/><circle cx="46.3" cy="16.3" r="1.8"/><circle cx="81.5" cy="39.3" r="1.6"/><circle cx="69.1" cy="30.8" r="1.6"/><circle cx="12.1" cy="28.6" r="1.8"/><circle cx="81.4" cy="46.5" r="1.8"/><circle cx="29.8" cy="42.9" r="1.1"/><circle cx="9.2" cy="27.2" r="1.8"/><circle cx="12.0" cy="30.2" r="2.2"/><circle cx="31.9" cy="20.7" r="1.4"/><circle cx="24.8" cy="46.7" r="1.6"/><circle cx="81.7" cy="43.9" r="1.8"/><circle cx="22.1" cy="47.1" r="1.7"/><circle cx="35.3" cy="15.3" r="2.3"/><circle cx="41.8" cy="13.7" r="1.7"/><circle cx="10.4" cy="29.8" r="1.6"/><circle cx="24.9" cy="37.5" r="2.1"/><circle cx="1.1" cy="25.6" r="1.5"/><circle cx="79.5" cy="37.5" r="1.4"/><circle cx="22.8" cy="7.4" r="2.3"/><circle cx="24.9" cy="29.2" r="1.7"/><circle cx="54.8" cy="29.0" r="2.0"/><circle cx="10.0" cy="36.5" r="1.5"/><circle cx="45.3" cy="16.1" r="1.5"/><circle cx="45.0" cy="22.3" r="1.6"/><circle cx="63.3" cy="28.4" r="1.2"/><circle cx="21.5" cy="21.9" r="2.2"/><circle cx="75.5" cy="26.2" r="1.2"/><circle cx="66.2" cy="20.5" r="1.8"/><circle cx="60.2" cy="30.3" r="1.7"/><circle cx="77.5" cy="18.5" r="1.6"/><circle cx="72.4" cy="9.4" r="1.5"/><circle cx="70.6" cy="3.2" r="2.1"/><circle cx="59.0" cy="20.8" r="1.5"/><circle cx="66.4" cy="43.7" r="1.3"/><circle cx="40.7" cy="26.4" r="1.7"/><circle cx="28.1" cy="7.4" r="1.8"/><circle cx="69.0" cy="3.3" r="1.4"/><circle cx="69.7" cy="38.0" r="1.9"/><circle cx="2.2" cy="34.7" r="2.3"/><circle cx="84.9" cy="33.7" r="1.2"/><circle cx="71.6" cy="10.5" r="1.9"/><circle cx="80.9" cy="34.2" r="1.3"/><circle cx="24.9" cy="44.1" r="1.3"/><circle cx="51.9" cy="19.9" r="1.3"/><circle cx="52.9" cy="2.1" r="1.3"/><circle cx="32.2" cy="3.5" r="1.2"/><circle cx="48.9" cy="35.6" r="2.1"/><circle cx="11.4" cy="20.7" r="1.5"/><circle cx="51.0" cy="23.5" r="2.2"/><circle cx="31.8" cy="2.7" r="1.9"/><circle cx="12.8" cy="30.3" r="1.7"/><circle cx="77.4" cy="26.6" r="1.8"/><circle cx="22.4" cy="26.5" r="1.4"/><circle cx="63.8" cy="24.8" r="1.3"/></svg><div class="abs" style="left:8.9px;top:8.4px;width:67.1px;height:29.6px;background:#fff"></div><div class="abs" style="left:36px;top:8px;width:13px;height:5.5px;background:#e5e0d5"></div><div class="sq" style="left:5.8px;top:38.0px;width:8.2px;height:4.2px;background:#30c0e8"></div><div class="sq" style="left:15.4px;top:38.0px;width:8.2px;height:4.2px;background:#2890d8"></div><div class="sq" style="left:25.1px;top:38.0px;width:8.2px;height:4.2px;background:#30c0e0"></div><div class="sq" style="left:34.7px;top:38.0px;width:8.2px;height:4.2px;background:#40c0a0"></div><div class="sq" style="left:44.3px;top:38.0px;width:8.2px;height:4.2px;background:#308858"></div><div class="sq" style="left:54.0px;top:38.0px;width:8.2px;height:4.2px;background:#70b0a0"></div></div>
<div class="th" style="left:565px;width:85px;background:#c9cdc1"><svg class="abs" style="left:0;top:0" width="85" height="48" fill="#d6d9cc"><circle cx="27.5" cy="7.2" r="2.0"/><circle cx="6.2" cy="25.7" r="1.6"/><circle cx="4.9" cy="24.4" r="1.2"/><circle cx="36.9" cy="3.4" r="1.3"/><circle cx="36.1" cy="39.7" r="1.3"/><circle cx="19.0" cy="30.1" r="2.3"/><circle cx="49.1" cy="19.0" r="2.4"/><circle cx="4.0" cy="41.2" r="1.5"/><circle cx="12.3" cy="5.7" r="1.6"/><circle cx="69.4" cy="8.7" r="1.9"/><circle cx="54.3" cy="17.9" r="1.9"/><circle cx="5.3" cy="2.9" r="1.4"/><circle cx="57.8" cy="20.5" r="1.6"/><circle cx="49.8" cy="21.8" r="1.6"/><circle cx="67.5" cy="33.6" r="1.5"/><circle cx="48.8" cy="25.2" r="2.3"/><circle cx="62.0" cy="13.8" r="2.4"/><circle cx="10.0" cy="20.1" r="2.1"/><circle cx="12.9" cy="23.5" r="1.2"/><circle cx="56.8" cy="36.7" r="1.9"/><circle cx="74.4" cy="15.1" r="2.0"/><circle cx="50.5" cy="27.8" r="1.7"/><circle cx="71.4" cy="45.3" r="1.8"/><circle cx="56.5" cy="2.9" r="2.0"/><circle cx="55.0" cy="47.7" r="2.2"/><circle cx="24.2" cy="18.5" r="2.0"/><circle cx="1.9" cy="22.2" r="1.4"/><circle cx="10.0" cy="2.8" r="2.1"/><circle cx="11.0" cy="11.9" r="1.7"/><circle cx="74.1" cy="3.9" r="1.7"/><circle cx="46.7" cy="42.4" r="2.2"/><circle cx="73.4" cy="13.4" r="1.7"/><circle cx="30.5" cy="42.4" r="2.3"/><circle cx="12.8" cy="8.5" r="1.5"/><circle cx="19.8" cy="23.3" r="1.9"/><circle cx="22.3" cy="0.2" r="1.7"/><circle cx="31.4" cy="27.2" r="2.3"/><circle cx="58.7" cy="24.7" r="1.9"/><circle cx="57.5" cy="2.6" r="2.3"/><circle cx="66.3" cy="42.0" r="2.2"/><circle cx="33.4" cy="19.2" r="1.3"/><circle cx="53.9" cy="3.0" r="1.3"/><circle cx="17.7" cy="7.8" r="1.6"/><circle cx="4.5" cy="0.0" r="1.4"/><circle cx="8.6" cy="17.5" r="1.2"/><circle cx="74.3" cy="29.5" r="1.4"/><circle cx="21.4" cy="16.7" r="1.6"/><circle cx="10.4" cy="40.7" r="2.4"/><circle cx="39.6" cy="23.2" r="1.3"/><circle cx="8.7" cy="16.4" r="1.5"/><circle cx="70.5" cy="7.7" r="1.2"/><circle cx="80.8" cy="25.4" r="1.4"/><circle cx="46.2" cy="1.3" r="1.8"/><circle cx="83.2" cy="41.4" r="2.0"/><circle cx="22.2" cy="17.6" r="1.4"/><circle cx="65.6" cy="25.6" r="2.1"/><circle cx="28.0" cy="10.7" r="2.2"/><circle cx="83.7" cy="40.9" r="2.2"/><circle cx="69.6" cy="35.5" r="1.5"/><circle cx="44.0" cy="17.1" r="1.2"/><circle cx="2.4" cy="13.4" r="1.5"/><circle cx="58.9" cy="45.9" r="1.7"/><circle cx="79.6" cy="47.4" r="2.3"/><circle cx="31.0" cy="10.6" r="1.5"/><circle cx="16.7" cy="9.8" r="1.9"/><circle cx="76.5" cy="40.3" r="1.8"/><circle cx="55.5" cy="38.4" r="1.3"/><circle cx="56.1" cy="43.7" r="2.1"/><circle cx="63.8" cy="22.9" r="1.4"/><circle cx="67.1" cy="16.0" r="2.2"/><circle cx="82.6" cy="19.0" r="1.7"/><circle cx="80.5" cy="34.8" r="1.4"/><circle cx="10.8" cy="7.3" r="2.3"/><circle cx="68.6" cy="7.0" r="2.2"/><circle cx="83.3" cy="31.5" r="1.6"/><circle cx="46.6" cy="6.3" r="1.2"/><circle cx="82.5" cy="31.2" r="1.8"/><circle cx="79.4" cy="20.8" r="2.2"/><circle cx="70.2" cy="10.1" r="1.5"/><circle cx="24.9" cy="11.5" r="1.9"/><circle cx="22.0" cy="20.1" r="1.4"/><circle cx="77.4" cy="17.0" r="1.7"/><circle cx="49.6" cy="43.4" r="1.7"/><circle cx="78.0" cy="24.1" r="1.8"/><circle cx="44.5" cy="0.9" r="1.7"/><circle cx="15.6" cy="0.2" r="2.2"/><circle cx="14.6" cy="22.7" r="2.1"/><circle cx="47.3" cy="15.6" r="1.8"/><circle cx="47.2" cy="37.6" r="1.3"/><circle cx="47.6" cy="11.9" r="1.5"/></svg><div class="abs" style="left:8.9px;top:8.4px;width:67.1px;height:29.6px;background:#fff"></div><div class="abs" style="left:36px;top:8px;width:13px;height:5.5px;background:#88b0c8"></div><div class="sq" style="left:5.8px;top:38.0px;width:8.2px;height:4.2px;background:#88b4cc"></div><div class="sq" style="left:15.4px;top:38.0px;width:8.2px;height:4.2px;background:#e87830"></div><div class="sq" style="left:25.1px;top:38.0px;width:8.2px;height:4.2px;background:#a0b880"></div><div class="sq" style="left:34.7px;top:38.0px;width:8.2px;height:4.2px;background:#f0b848"></div><div class="sq" style="left:44.3px;top:38.0px;width:8.2px;height:4.2px;background:#70a098"></div><div class="sq" style="left:54.0px;top:38.0px;width:8.2px;height:4.2px;background:#909090"></div></div>
<div class="sel" style="left:655.3px;width:94.5px"></div>
<div class="th" style="left:660.4px;width:84.6px;background:#dfe8cf"><svg class="abs" style="left:0;top:0" width="85" height="48" fill="#cddab6"><circle cx="39.4" cy="17.9" r="1.0"/><circle cx="73.7" cy="0.3" r="1.4"/><circle cx="76.4" cy="3.9" r="1.4"/><circle cx="52.4" cy="2.0" r="1.2"/><circle cx="59.8" cy="21.7" r="1.6"/><circle cx="13.4" cy="11.4" r="1.0"/><circle cx="43.0" cy="44.3" r="1.4"/><circle cx="65.8" cy="18.4" r="1.6"/><circle cx="8.6" cy="14.0" r="1.5"/><circle cx="61.7" cy="20.2" r="1.0"/><circle cx="22.7" cy="10.1" r="1.2"/><circle cx="68.8" cy="9.6" r="1.7"/><circle cx="74.7" cy="2.6" r="1.2"/><circle cx="41.8" cy="1.1" r="1.3"/><circle cx="77.0" cy="5.4" r="1.4"/><circle cx="10.3" cy="27.8" r="1.7"/><circle cx="17.3" cy="0.4" r="1.0"/><circle cx="45.9" cy="0.8" r="1.0"/><circle cx="42.2" cy="44.2" r="1.3"/><circle cx="33.8" cy="30.7" r="1.0"/><circle cx="49.3" cy="8.3" r="1.4"/><circle cx="81.5" cy="2.6" r="1.4"/><circle cx="51.5" cy="7.2" r="1.1"/><circle cx="84.6" cy="47.9" r="1.0"/><circle cx="60.0" cy="45.6" r="1.1"/><circle cx="51.9" cy="2.1" r="1.2"/><circle cx="57.3" cy="28.3" r="1.6"/><circle cx="7.4" cy="16.7" r="1.7"/><circle cx="49.7" cy="21.7" r="1.3"/><circle cx="83.8" cy="27.6" r="0.9"/><circle cx="67.9" cy="15.8" r="1.3"/><circle cx="18.1" cy="21.3" r="1.2"/><circle cx="7.5" cy="30.2" r="1.0"/><circle cx="66.6" cy="1.2" r="1.6"/><circle cx="68.6" cy="23.9" r="1.5"/><circle cx="21.1" cy="35.4" r="1.3"/><circle cx="19.6" cy="46.3" r="1.3"/><circle cx="31.7" cy="41.3" r="1.2"/><circle cx="56.7" cy="8.2" r="1.7"/><circle cx="22.0" cy="2.4" r="1.8"/><circle cx="14.7" cy="45.4" r="1.8"/><circle cx="51.6" cy="0.6" r="1.0"/><circle cx="17.7" cy="18.7" r="1.5"/><circle cx="82.1" cy="17.0" r="1.0"/><circle cx="47.8" cy="6.6" r="1.0"/><circle cx="47.3" cy="33.4" r="1.0"/><circle cx="38.4" cy="33.8" r="1.6"/><circle cx="32.6" cy="42.6" r="1.1"/><circle cx="60.8" cy="37.0" r="1.7"/><circle cx="42.0" cy="4.8" r="0.9"/><circle cx="45.0" cy="8.3" r="1.5"/><circle cx="7.2" cy="37.4" r="1.1"/><circle cx="1.1" cy="8.4" r="1.3"/><circle cx="47.5" cy="18.6" r="1.1"/><circle cx="41.0" cy="45.4" r="1.4"/><circle cx="80.0" cy="1.4" r="1.8"/><circle cx="75.6" cy="26.1" r="1.4"/><circle cx="45.7" cy="43.7" r="1.0"/><circle cx="54.6" cy="26.0" r="1.2"/><circle cx="61.6" cy="34.6" r="1.0"/><circle cx="59.5" cy="21.8" r="1.3"/><circle cx="54.1" cy="2.5" r="1.4"/><circle cx="31.7" cy="42.2" r="1.1"/><circle cx="70.0" cy="35.0" r="1.5"/><circle cx="74.4" cy="1.7" r="1.4"/><circle cx="52.1" cy="32.5" r="1.3"/><circle cx="5.9" cy="9.1" r="1.4"/><circle cx="15.4" cy="3.1" r="1.2"/><circle cx="40.0" cy="25.7" r="0.9"/><circle cx="65.9" cy="16.0" r="1.6"/><circle cx="0.7" cy="45.8" r="1.4"/><circle cx="83.0" cy="47.3" r="1.6"/><circle cx="9.0" cy="16.7" r="1.1"/><circle cx="66.3" cy="9.2" r="1.1"/><circle cx="9.4" cy="5.8" r="1.7"/><circle cx="83.0" cy="17.9" r="1.6"/><circle cx="39.7" cy="25.1" r="1.2"/><circle cx="54.0" cy="11.3" r="1.1"/><circle cx="44.0" cy="9.5" r="1.3"/><circle cx="80.2" cy="1.1" r="1.0"/><circle cx="68.0" cy="2.8" r="1.1"/><circle cx="72.4" cy="29.1" r="1.1"/><circle cx="5.0" cy="13.2" r="1.2"/><circle cx="68.0" cy="46.8" r="1.6"/><circle cx="76.6" cy="44.7" r="1.7"/><circle cx="78.2" cy="46.4" r="1.0"/><circle cx="27.0" cy="11.9" r="1.4"/><circle cx="41.8" cy="16.7" r="1.7"/><circle cx="33.9" cy="10.0" r="1.1"/><circle cx="39.2" cy="29.3" r="1.4"/><circle cx="37.4" cy="8.9" r="1.3"/><circle cx="27.6" cy="8.2" r="1.4"/><circle cx="16.0" cy="34.2" r="1.5"/><circle cx="11.7" cy="30.0" r="1.2"/><circle cx="38.0" cy="29.1" r="1.6"/><circle cx="75.1" cy="35.2" r="1.1"/><circle cx="46.1" cy="16.1" r="0.9"/><circle cx="47.0" cy="22.6" r="1.7"/><circle cx="27.5" cy="40.0" r="1.4"/><circle cx="8.4" cy="34.4" r="1.2"/><circle cx="45.3" cy="3.4" r="0.9"/><circle cx="78.3" cy="2.0" r="1.0"/><circle cx="13.9" cy="4.6" r="1.6"/><circle cx="84.6" cy="31.2" r="1.3"/><circle cx="75.5" cy="24.3" r="1.0"/><circle cx="58.7" cy="17.2" r="1.1"/><circle cx="27.2" cy="18.5" r="1.1"/><circle cx="52.1" cy="41.7" r="1.4"/><circle cx="0.8" cy="32.8" r="0.9"/><circle cx="40.7" cy="41.6" r="1.5"/></svg><div class="abs" style="left:9.6px;top:9.4px;width:65px;height:28.2px;background:#465f50"></div><div class="abs" style="left:35.3px;top:8.5px;width:13.3px;height:5.5px;background:#5a9e3e"></div><div class="sq" style="left:5.6px;top:38.0px;width:8.2px;height:4.2px;background:#4e9a3c"></div><div class="sq" style="left:15.2px;top:38.0px;width:8.2px;height:4.2px;background:#90bc48"></div><div class="sq" style="left:24.9px;top:38.0px;width:8.2px;height:4.2px;background:#d0c850"></div><div class="sq" style="left:34.5px;top:38.0px;width:8.2px;height:4.2px;background:#289078"></div><div class="sq" style="left:44.1px;top:38.0px;width:8.2px;height:4.2px;background:#48b8c8"></div><div class="sq" style="left:53.8px;top:38.0px;width:8.2px;height:4.2px;background:#2888c8"></div></div>
<div class="th" style="left:755.3px;width:84.3px;background:#c9e1f5"><svg class="abs" style="left:0;top:0" width="85" height="48" fill="#dcecf9"><circle cx="38.5" cy="26.9" r="2.2"/><circle cx="39.6" cy="24.4" r="1.8"/><circle cx="15.7" cy="24.6" r="1.9"/><circle cx="67.4" cy="4.5" r="1.5"/><circle cx="7.7" cy="38.9" r="1.9"/><circle cx="3.6" cy="47.1" r="2.2"/><circle cx="55.6" cy="29.5" r="1.3"/><circle cx="1.3" cy="25.4" r="1.2"/><circle cx="16.2" cy="11.6" r="1.2"/><circle cx="39.4" cy="21.1" r="2.1"/><circle cx="44.1" cy="30.7" r="1.7"/><circle cx="56.3" cy="22.0" r="1.5"/><circle cx="84.8" cy="47.8" r="2.1"/><circle cx="60.2" cy="15.1" r="1.4"/><circle cx="24.6" cy="3.4" r="2.0"/><circle cx="34.0" cy="40.6" r="1.6"/><circle cx="81.4" cy="40.7" r="1.1"/><circle cx="17.8" cy="43.7" r="1.7"/><circle cx="83.3" cy="19.1" r="1.2"/><circle cx="53.5" cy="37.4" r="1.4"/><circle cx="7.4" cy="16.0" r="2.2"/><circle cx="64.4" cy="5.7" r="1.4"/><circle cx="8.6" cy="2.9" r="2.0"/><circle cx="15.1" cy="26.8" r="1.7"/><circle cx="16.2" cy="35.1" r="1.3"/><circle cx="54.7" cy="5.6" r="1.6"/><circle cx="18.1" cy="13.0" r="2.2"/><circle cx="68.3" cy="14.6" r="2.1"/><circle cx="17.9" cy="18.9" r="2.1"/><circle cx="54.6" cy="4.8" r="2.3"/><circle cx="18.1" cy="12.4" r="2.0"/><circle cx="28.0" cy="14.2" r="1.2"/><circle cx="7.7" cy="28.0" r="1.4"/><circle cx="51.1" cy="17.8" r="1.7"/><circle cx="81.5" cy="23.2" r="1.8"/><circle cx="73.7" cy="8.8" r="1.3"/><circle cx="77.2" cy="39.3" r="1.4"/><circle cx="16.1" cy="35.5" r="2.2"/><circle cx="16.7" cy="45.6" r="2.1"/><circle cx="51.3" cy="20.2" r="1.3"/><circle cx="3.3" cy="46.2" r="1.4"/><circle cx="59.9" cy="12.3" r="2.1"/><circle cx="50.7" cy="14.1" r="1.3"/><circle cx="61.2" cy="3.3" r="1.4"/><circle cx="47.5" cy="40.9" r="1.8"/><circle cx="23.8" cy="44.0" r="1.4"/><circle cx="1.4" cy="12.9" r="1.6"/><circle cx="5.1" cy="8.5" r="1.6"/><circle cx="48.6" cy="6.3" r="1.6"/><circle cx="75.7" cy="47.1" r="1.9"/><circle cx="58.8" cy="28.1" r="1.3"/><circle cx="3.0" cy="0.9" r="2.2"/><circle cx="59.6" cy="46.2" r="1.2"/><circle cx="54.1" cy="23.1" r="2.0"/><circle cx="27.1" cy="48.0" r="1.2"/><circle cx="46.4" cy="35.4" r="2.2"/><circle cx="62.7" cy="33.8" r="2.0"/><circle cx="77.8" cy="16.9" r="1.9"/><circle cx="76.6" cy="41.8" r="1.6"/><circle cx="67.2" cy="41.4" r="1.8"/><circle cx="53.1" cy="18.4" r="1.8"/><circle cx="51.8" cy="3.8" r="1.9"/><circle cx="84.4" cy="42.2" r="2.0"/><circle cx="33.0" cy="35.3" r="1.8"/><circle cx="37.4" cy="40.2" r="1.2"/><circle cx="63.8" cy="1.4" r="1.8"/><circle cx="40.9" cy="11.1" r="1.9"/><circle cx="42.3" cy="29.5" r="2.2"/><circle cx="21.7" cy="0.5" r="1.5"/><circle cx="57.6" cy="9.7" r="1.3"/><circle cx="77.0" cy="31.7" r="1.6"/><circle cx="75.8" cy="15.7" r="1.9"/><circle cx="16.9" cy="20.7" r="2.1"/><circle cx="77.7" cy="42.3" r="1.6"/><circle cx="49.6" cy="15.2" r="1.3"/><circle cx="42.2" cy="40.2" r="2.1"/><circle cx="60.5" cy="45.6" r="1.5"/><circle cx="14.4" cy="21.6" r="1.5"/><circle cx="18.2" cy="19.9" r="1.9"/><circle cx="42.0" cy="15.1" r="2.1"/><circle cx="83.5" cy="21.7" r="1.2"/><circle cx="2.7" cy="41.9" r="1.2"/><circle cx="60.2" cy="27.4" r="1.5"/><circle cx="67.3" cy="0.9" r="1.3"/><circle cx="38.7" cy="1.2" r="2.1"/><circle cx="20.2" cy="6.8" r="1.2"/><circle cx="53.5" cy="21.4" r="1.9"/><circle cx="55.7" cy="38.8" r="2.2"/><circle cx="58.2" cy="9.6" r="1.7"/><circle cx="15.2" cy="0.5" r="1.7"/></svg><div class="abs" style="left:8.7px;top:8.4px;width:66.8px;height:30.2px;background:#3a3848"></div><div class="abs" style="left:35.7px;top:8.5px;width:13.3px;height:5.5px;background:#3890c0"></div><div class="sq" style="left:5.8px;top:38.0px;width:8.2px;height:4.2px;background:#3890c0"></div><div class="sq" style="left:15.4px;top:38.0px;width:8.2px;height:4.2px;background:#50b8c8"></div><div class="sq" style="left:25.1px;top:38.0px;width:8.2px;height:4.2px;background:#80c0a8"></div><div class="sq" style="left:34.7px;top:38.0px;width:8.2px;height:4.2px;background:#789888"></div><div class="sq" style="left:44.3px;top:38.0px;width:8.2px;height:4.2px;background:#88b8c0"></div><div class="sq" style="left:54.0px;top:38.0px;width:8.2px;height:4.2px;background:#5898c8"></div></div>
<div class="glab" style="left:654px">バリエーション</div>
<div class="vsep" style="left:873px"></div>
<div class="vsep" style="left:987px"></div>
<svg class="abs" style="left:860px;top:0" width="267" height="90" viewBox="860 64 267 90" fill="none" stroke-linejoin="round">
<path d="M888.2 77.2V96.6M886.4 77.2H890M886.4 96.6H890M891.4 74.2H916.6M891.4 72.4V76M916.6 72.4V76" stroke="#2b88d8" stroke-width="1"/>
<rect x="891.4" y="77.6" width="25.2" height="18.8" stroke="#3a3a3a" stroke-width="1.1" fill="#fff"/>
<rect x="893.6" y="79.8" width="20.8" height="14.4" stroke="#3a3a3a" stroke-width="1" fill="#fafafa"/>
<path d="M923.2 84L926 86.8L928.8 84" stroke="#333" stroke-width="1.3" stroke-linecap="round"/>
<path d="M944.6 71.6H956.6L964.6 79.6V98.2H944.6Z" fill="#fff" stroke="#3a3a3a" stroke-width="1.1"/>
<path d="M956.6 71.6V79.6H964.6" stroke="#3a3a3a" stroke-width="1.1"/>
<path d="M954.2 80.4C957 80 958.4 82.6 958 86.4C957.8 88.4 957.4 90 957 91.4C957.2 87.6 956.6 84 953.4 81.6Z" fill="#86c0ee" stroke="none"/>
<path d="M941.8 86L949 78.6L955.4 85L948.2 92.4Z" fill="#fff" stroke="#3a3a3a" stroke-width="1.1"/>
<path d="M947.6 81V77.6A1.6 1.6 0 0 1 950.8 77.6V83" stroke="#3a3a3a" stroke-width="1"/>
<path d="M1013.6 72.4H1024.6L1032.6 80.4V98.2H1012.2V86" fill="#fff" stroke="#3a3a3a" stroke-width="1.1"/>
<path d="M1024.6 72.4V80.4H1032.6" stroke="#3a3a3a" stroke-width="1.1"/>
<path d="M1012.6 69.2H1020L1015.8 77H1019.8L1008 88.8L1011.4 80.6H1007.4Z" fill="#4a9fe2" stroke="#2f8ad6" stroke-width=".7"/>
</svg>
<div class="blab" style="left:907px;top:42px">スライド<br>のサイズ</div>
<div class="blab" style="left:955.3px;top:42px">背景の<br>書式設定</div>
<div class="blab" style="left:1023.5px;top:42px">デザイン<br>アイデア</div>
<div class="glab" style="left:930.4px">ユーザー設定</div>
<div class="glab" style="left:1023.5px">デザイナー</div>
</div>
<div class="left">
<div class="num" style="top:10.5px">1</div>
<div class="num" style="top:188.0px">2</div>
<div class="num" style="top:365.5px">3</div>
<svg class="abs" style="left:9.6px;top:209.8px" width="12" height="10.3" viewBox="0 0 14 12"><path d="M8 .6L9.7 4.3L13.6 4.7L10.7 7.4L11.5 11.4L8 9.4L4.5 11.4L5.3 7.4L2.4 4.7L6.3 4.3Z" fill="#8a8a8a"/><path d="M.6 3.4H3M.2 5.6H2.4M.8 7.8H3.2" stroke="#9a9a9a" stroke-width=".8"/></svg>
<div class="abs" style="left:30.1px;top:9.9px;width:288.9px;height:166.9px;background:#cd4024"></div>
<div class="abs" style="left:33px;top:12.8px;width:283px;height:161.1px;background:#fff"></div>
<div class="slide" style="left:33.1px;top:13.7px;width:720.5px;height:405.3px;transform:scale(.3926)">
<svg class="abs" style="left:0;top:0" width="721" height="406" viewBox="0 0 721 406">
<rect width="721" height="406" fill="#fff"/>
<use href="#ft" transform="translate(-2.3 -6.9) scale(1 1)"/><use href="#ft" transform="translate(287.1 -6.9) scale(-1 1)"/><use href="#ft" transform="translate(287.1 -6.9) scale(1 1)"/><use href="#ft" transform="translate(576.5 -6.9) scale(-1 1)"/><use href="#ft" transform="translate(576.5 -6.9) scale(1 1)"/><use href="#ft" transform="translate(-2.3 274.3) scale(1 -1)"/><use href="#ft" transform="translate(287.1 274.3) scale(-1 -1)"/><use href="#ft" transform="translate(287.1 274.3) scale(1 -1)"/><use href="#ft" transform="translate(576.5 274.3) scale(-1 -1)"/><use href="#ft" transform="translate(576.5 274.3) scale(1 -1)"/><use href="#ft" transform="translate(-2.3 274.3) scale(1 1)"/><use href="#ft" transform="translate(287.1 274.3) scale(-1 1)"/><use href="#ft" transform="translate(287.1 274.3) scale(1 1)"/><use href="#ft" transform="translate(576.5 274.3) scale(-1 1)"/><use href="#ft" transform="translate(576.5 274.3) scale(1 1)"/>
<rect x="75.7" y="74.3" width="569.5" height="257.3" fill="#000" opacity=".07"/>
<rect x="76.4" y="74.8" width="568.1" height="256" fill="#000" opacity=".08"/>
<rect x="77.2" y="75.3" width="566.5" height="254.3" fill="#fff"/>
<rect x="85.7" y="83.3" width="549.2" height="238.5" fill="#465f50"/>
<rect x="303" y="83.3" width="115" height="36.4" fill="#1d2b22" opacity=".28"/>
<rect x="302.6" y="75.4" width="114.2" height="42.9" fill="#579e3e"/>
<path d="M310.1 75.4V113.6H409.9V75.4" fill="none" stroke="#a8cd97" stroke-width=".9"/>
<rect x="498.9" y="237.4" width="131.3" height="130.5" fill="#fff"/>
<use href="#croc" transform="translate(499.5 266.4)"/>
</svg>
<div class="abs jp" style="left:.3px;top:148.3px;width:720px;text-align:center;color:#fff;font-size:53px;font-weight:500;letter-spacing:.6px;line-height:50.6px;text-shadow:0 1px 2px rgba(0,0,0,.35);white-space:nowrap">ピンクのワニの商品<br>化について</div>
<div class="abs jp" style="left:0;top:277.8px;width:720px;text-align:center;color:#e4ebe3;font-size:13px;line-height:18px;font-weight:500;white-space:nowrap">わにちゃん</div>
</div>
<div class="abs" style="left:31.5px;top:189.8px;width:285px;height:162px;background:#fff;border:1px dotted #cfcfcf"></div>
<div class="slide" style="left:32px;top:190.6px;transform:scale(.3944)">
<div class="abs" style="left:18.5px;top:15px;width:685.5px;height:375.5px;border:2.2px solid #c9c9c9"></div>
<div class="abs" style="left:26.6px;top:22.5px;width:669.4px;height:360.5px;background:#465f50"></div>
<div class="abs jp" style="left:74px;top:53px;color:#fff;font-size:35.3px;font-weight:500;line-height:50px;white-space:nowrap;text-shadow:0 1px 1px rgba(0,0,0,.3)">ピンクのワニの紹介</div>
<div class="abs jp" style="left:73px;top:124.5px;color:#fff;font-size:13.1px;font-weight:700;white-space:nowrap"><div style="height:22.8px;line-height:22.8px"><span style="display:inline-block;width:12px;font-size:9px;vertical-align:top">•</span>1995年春に誕生</div><div style="height:22.8px;line-height:22.8px"><span style="display:inline-block;width:12px;font-size:9px;vertical-align:top">•</span>男の子</div><div style="height:22.8px;line-height:22.8px"><span style="display:inline-block;width:12px;font-size:9px;vertical-align:top">•</span>ツチノコといわれたことがある</div><div style="height:22.8px;line-height:22.8px"><span style="display:inline-block;width:12px;font-size:9px;vertical-align:top">•</span>さびしがりや（おともだちをさがしている）</div><div style="height:22.8px;line-height:22.8px"><span style="display:inline-block;width:12px;font-size:9px;vertical-align:top">•</span>小さな子供たちに大人気</div></div>
<svg class="abs" style="left:0;top:0" width="720" height="405" viewBox="0 0 720 405"><use href="#croc" transform="translate(432 248.5) scale(1.67)"/></svg>
</div>
<div class="abs" style="left:31.5px;top:367.4px;width:285px;height:162px;background:#fff;border:1px dotted #cfcfcf"></div>
<div class="slide" style="left:32px;top:368.2px;transform:scale(.3944)">
<div class="abs" style="left:18.5px;top:15px;width:685.5px;height:375.5px;border:2.2px solid #c9c9c9"></div>
<div class="abs" style="left:26.6px;top:22.5px;width:669.4px;height:360.5px;background:#465f50"></div>
<div class="abs jp" style="left:74px;top:53px;color:#fff;font-size:35.3px;font-weight:500;line-height:50px;white-space:nowrap;text-shadow:0 1px 1px rgba(0,0,0,.3)">ピンクのワニ商品が受ける客層</div>
<div class="abs jp" style="left:73px;top:124.5px;color:#fff;font-size:13.1px;font-weight:700;white-space:nowrap"><div style="height:22.8px;line-height:22.8px"><span style="display:inline-block;width:12px;font-size:9px;vertical-align:top">•</span>子供向け（〜小学生）</div><div style="height:22.8px;line-height:22.8px"><span style="display:inline-block;width:12px;font-size:9px;vertical-align:top">•</span>乳幼児</div><div style="height:22.8px;line-height:22.8px"><span style="display:inline-block;width:12px;font-size:9px;vertical-align:top">•</span>女性</div><div style="height:22.8px;line-height:22.8px"><span style="display:inline-block;width:12px;font-size:9px;vertical-align:top">•</span>親子ペア、ファミリー</div><div style="height:22.8px;line-height:22.8px"><span style="display:inline-block;width:12px;font-size:9px;vertical-align:top">•</span>キャラクターグッズ好きな方 etc…</div></div>
<svg class="abs" style="left:0;top:0" width="720" height="405" viewBox="0 0 720 405"><polygon points="516.0,117.0 526.9,149.5 561.2,149.8 533.7,170.2 543.9,202.9 516.0,183.1 488.1,202.9 498.3,170.2 470.8,149.8 505.1,149.5" fill="#9ccdb9" stroke="#3fa98b" stroke-width="2.2" stroke-linejoin="miter"/></svg>
</div>
<div class="abs" style="left:335px;top:0;width:18px;height:500px;background:#fafafa;border-left:1px solid #ededed"></div>
<div class="abs" style="left:338.4px;top:3px;width:8px;height:171.5px;border-radius:4px;background:#c1c1c1"></div>
</div>
<div class="divv"></div>
<div class="main">
<div class="abs" style="left:26.4px;top:44.7px;width:720.5px;height:405.3px;box-shadow:0 1px 4px rgba(0,0,0,.14)"></div>
<div class="slide" style="left:26.4px;top:44.7px;width:720.5px;height:405.3px">
<svg class="abs" style="left:0;top:0" width="721" height="406" viewBox="0 0 721 406">
<rect width="721" height="406" fill="#fff"/>
<use href="#ft" transform="translate(-2.3 -6.9) scale(1 1)"/><use href="#ft" transform="translate(287.1 -6.9) scale(-1 1)"/><use href="#ft" transform="translate(287.1 -6.9) scale(1 1)"/><use href="#ft" transform="translate(576.5 -6.9) scale(-1 1)"/><use href="#ft" transform="translate(576.5 -6.9) scale(1 1)"/><use href="#ft" transform="translate(-2.3 274.3) scale(1 -1)"/><use href="#ft" transform="translate(287.1 274.3) scale(-1 -1)"/><use href="#ft" transform="translate(287.1 274.3) scale(1 -1)"/><use href="#ft" transform="translate(576.5 274.3) scale(-1 -1)"/><use href="#ft" transform="translate(576.5 274.3) scale(1 -1)"/><use href="#ft" transform="translate(-2.3 274.3) scale(1 1)"/><use href="#ft" transform="translate(287.1 274.3) scale(-1 1)"/><use href="#ft" transform="translate(287.1 274.3) scale(1 1)"/><use href="#ft" transform="translate(576.5 274.3) scale(-1 1)"/><use href="#ft" transform="translate(576.5 274.3) scale(1 1)"/>
<rect x="75.7" y="74.3" width="569.5" height="257.3" fill="#000" opacity=".07"/>
<rect x="76.4" y="74.8" width="568.1" height="256" fill="#000" opacity=".08"/>
<rect x="77.2" y="75.3" width="566.5" height="254.3" fill="#fff"/>
<rect x="85.7" y="83.3" width="549.2" height="238.5" fill="#465f50"/>
<rect x="303" y="83.3" width="115" height="36.4" fill="#1d2b22" opacity=".28"/>
<rect x="302.6" y="75.4" width="114.2" height="42.9" fill="#579e3e"/>
<path d="M310.1 75.4V113.6H409.9V75.4" fill="none" stroke="#a8cd97" stroke-width=".9"/>
<rect x="498.9" y="237.4" width="131.3" height="130.5" fill="#fff"/>
<use href="#croc" transform="translate(499.5 266.4)"/>
</svg>
<div class="abs jp" style="left:.3px;top:148.3px;width:720px;text-align:center;color:#fff;font-size:53px;font-weight:500;letter-spacing:.6px;line-height:50.6px;text-shadow:0 1px 2px rgba(0,0,0,.35);white-space:nowrap">ピンクのワニの商品<br>化について</div>
<div class="abs jp" style="left:0;top:277.8px;width:720px;text-align:center;color:#e4ebe3;font-size:13px;line-height:18px;font-weight:500;white-space:nowrap">わにちゃん</div>
</div>
<div class="abs" style="left:0;top:495.5px;width:773px;height:1px;background:#dedede"></div>
<div class="abs" style="left:0;top:496.5px;width:773px;height:3.5px;background:#f3f3f3"></div>
</div>
<div class="sb">
<div class="sbt" style="left:24px;word-spacing:1.2px">スライド 1 / 8</div>
<div class="sbt" style="left:117px">日本語</div>
<div class="abs" style="left:777px;top:1px;width:36.5px;height:22px;background:#a3a3a3"></div>
<svg class="abs" style="left:0;top:0" width="1127" height="23" viewBox="0 654 1127 23" fill="none" stroke="#666" stroke-linecap="round">
<path d="M645.6 667.6H657.4M645.6 670.4H652.4M645.6 664.8H657.4" stroke-width="1.1" stroke-linecap="butt"/><path d="M649 662.6L651.5 659.6L654 662.6Z" fill="#666" stroke="none"/>
<path d="M705 660.2H718V668.6H710.4L707.6 671.6V668.6H705Z" fill="#666" stroke="none"/>
<rect x="788.4" y="659.6" width="13.8" height="12" rx="1" fill="#fff" stroke="none"/><rect x="792.6" y="661.6" width="7.4" height="5" fill="#a3a3a3" stroke="none"/><path d="M792.6 669.2H800" stroke="#a3a3a3" stroke-width="1" stroke-linecap="butt"/>
<g fill="#666" stroke="none"><rect x="824" y="660.2" width="6" height="4.4" rx=".8"/><rect x="832.6" y="660.2" width="6" height="4.4" rx=".8"/><rect x="824" y="667" width="6" height="4.4" rx=".8"/><rect x="832.6" y="667" width="6" height="4.4" rx=".8"/></g>
<path d="M861 660.6H874.6M862.4 661V668H873.2V661M867.8 668V671.4M864.8 671.6H870.8M865.4 664.4H870.2" stroke-width="1.2"/>
<path d="M893.6 665.6H900.6" stroke-width="1.6" stroke-linecap="butt"/>
<path d="M910.5 665.6H1005.5" stroke="#a6a6a6" stroke-width="3.6"/>
<circle cx="957.8" cy="665.6" r="1.1" fill="#e2e2e2" stroke="none"/>
<circle cx="946.4" cy="665.6" r="5.4" fill="#fff" stroke="#b9b9b9" stroke-width=".8"/>
<path d="M1015.2 665.6H1022.6M1018.9 661.9V669.3" stroke-width="1.6" stroke-linecap="butt"/>
<rect x="1086.4" y="659.4" width="12" height="12" stroke-width="1" rx=".5"/>
<path d="M1092.4 661V663.6M1092.4 667.2V669.8M1088 665.4H1090.6M1094.2 665.4H1096.8" stroke-width="1"/>
</svg>
<div class="sbt" style="left:663px">メモ</div>
<div class="sbt" style="left:723px">コメント</div>
<div class="sbt" style="left:1040.5px;font-size:12px">76%</div>
</div>
</div>
</body></html>
